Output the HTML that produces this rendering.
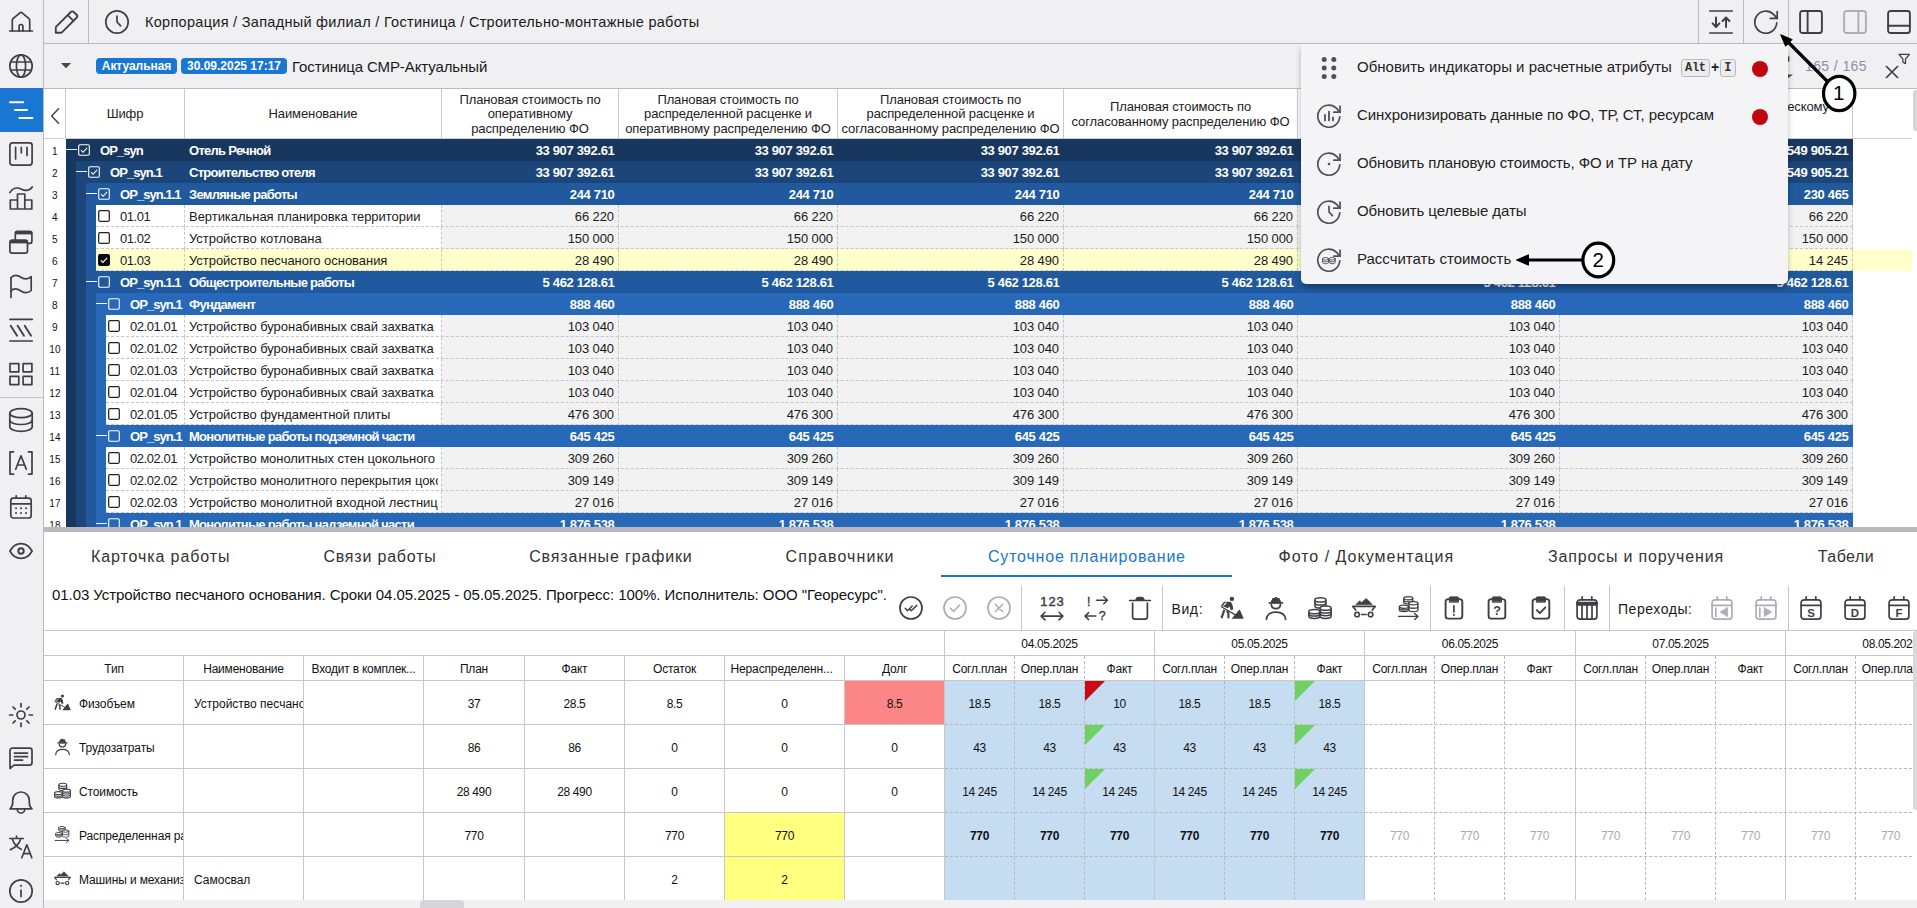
<!DOCTYPE html><html lang="ru"><head><meta charset="utf-8"><title>Суточное планирование</title><style>
*{box-sizing:border-box}
html,body{margin:0;padding:0}
body{width:1917px;height:908px;overflow:hidden;position:relative;background:#f0f0f3;font-family:"Liberation Sans",sans-serif;color:#1a1a1a;font-size:13px}
.a{position:absolute}
.t{position:absolute;white-space:pre;line-height:1}
svg{position:absolute;overflow:visible}
.ic{fill:none;stroke:#3a3a3f;stroke-width:1.6;stroke-linecap:round;stroke-linejoin:round}
.row{position:absolute;left:66px;height:22px;width:1787px}
.num{position:absolute;left:44px;width:22px;text-align:center;letter-spacing:.3px;font-size:10px;line-height:25px;height:22px;color:#111}
.c{position:absolute;top:0;height:22px;line-height:23.5px;white-space:pre;overflow:hidden;font-size:13px}
.r{text-align:right}
.b{font-weight:700;color:#fff;letter-spacing:-0.72px}
.bn{letter-spacing:-0.33px}
.bc{letter-spacing:-0.95px}
.hd{position:absolute;top:90px;height:49px;text-align:center;font-size:13px;line-height:14.5px;display:flex;align-items:center;justify-content:center;white-space:pre;color:#222;letter-spacing:-0.1px}
.tab{position:absolute;top:548px;font-size:16px;letter-spacing:.8px;color:#333;white-space:pre;line-height:18px}
.g{position:absolute;white-space:pre;font-size:12px;line-height:14px;text-align:center;color:#111}
</style></head><body>
<div class="a" style="left:0px;top:0px;width:1917px;height:44px;background:#f0f0f3;border-bottom:1px solid #bbbbc3"></div>
<div class="a" style="left:0px;top:44px;width:1917px;height:45px;background:#f0f0f3;border-bottom:1px solid #bbbbc3"></div>
<div class="a" style="left:0px;top:0px;width:44px;height:908px;background:#f0f0f3;border-right:1px solid #bbbbc3"></div>
<div class="a" style="left:0px;top:88px;width:43px;height:44px;background:#1976d2"></div>
<div class="a" style="left:0px;top:397px;width:43px;height:1px;background:#c0c0c8"></div>
<div class="a" style="left:88px;top:0px;width:1px;height:43px;background:#bbbbc3"></div>
<div class="a" style="left:1698px;top:0px;width:1px;height:43px;background:#bbbbc3"></div>
<div class="a" style="left:1743px;top:0px;width:1px;height:43px;background:#bbbbc3"></div>
<div class="a" style="left:1788px;top:0px;width:1px;height:43px;background:#bbbbc3"></div>
<div class="t" style="left:145px;top:15px;font-size:14.5px;color:#1a1a1a;letter-spacing:0.29px">Корпорация / Западный филиал / Гостиница / Строительно-монтажные работы</div>
<svg style="left:60px;top:62px" width="12" height="7" viewBox="0 0 12 7"><path d="M0.9 1h10.2l-5.100 5.200z" fill="#47474d"/></svg>
<div class="a" style="left:96px;top:58px;width:81px;height:16px;background:#1976d2;border-radius:4px;color:#fff;font-size:12px;font-weight:700;line-height:16px;text-align:center;letter-spacing:-0.05px">Актуальная</div>
<div class="a" style="left:181px;top:58px;width:106px;height:16px;background:#1976d2;border-radius:4px;color:#fff;font-size:12px;font-weight:700;line-height:16px;text-align:center;letter-spacing:0px">30.09.2025 17:17</div>
<div class="t" style="left:292px;top:59px;font-size:15px;letter-spacing:-0.1px">Гостиница СМР-Актуальный</div>
<div class="t" style="left:1805px;top:58.5px;font-size:14px;color:#8b90a7;letter-spacing:0.4px">165 / 165</div>
<div class="a" style="left:44px;top:89px;width:1873px;height:438px;background:#fff"></div>
<div class="a" style="left:44px;top:138px;width:1868px;height:1px;background:#d0d0d4"></div>
<div class="a" style="left:65px;top:89px;width:1px;height:49px;background:#c9c9cd"></div>
<div class="a" style="left:184px;top:89px;width:1px;height:49px;background:#c9c9cd"></div>
<div class="a" style="left:441px;top:89px;width:1px;height:49px;background:#c9c9cd"></div>
<div class="a" style="left:618px;top:89px;width:1px;height:49px;background:#c9c9cd"></div>
<div class="a" style="left:837px;top:89px;width:1px;height:49px;background:#c9c9cd"></div>
<div class="a" style="left:1063px;top:89px;width:1px;height:49px;background:#c9c9cd"></div>
<div class="a" style="left:1297px;top:89px;width:1px;height:49px;background:#c9c9cd"></div>
<div class="a" style="left:1559px;top:89px;width:1px;height:49px;background:#c9c9cd"></div>
<div class="a" style="left:1852px;top:89px;width:1px;height:49px;background:#c9c9cd"></div>
<div class="hd" style="left:66px;width:118px;">Шифр</div>
<div class="hd" style="left:185px;width:256px;">Наименование</div>
<div class="hd" style="left:442px;width:176px;">Плановая стоимость по
оперативному
распределению ФО</div>
<div class="hd" style="left:619px;width:218px;">Плановая стоимость по
распределенной расценке и
оперативному распределению ФО</div>
<div class="hd" style="left:838px;width:225px;">Плановая стоимость по
распределенной расценке и
согласованному распределению ФО</div>
<div class="hd" style="left:1064px;width:233px;">Плановая стоимость по
согласованному распределению ФО</div>
<div class="hd" style="left:1298px;width:261px;">Плановая стоимость по
оперативному распределению СТ</div>
<div class="hd" style="left:1560px;width:292px;padding-left:5px;">Фактическая стоимость по физическому
объему работ</div>
<svg style="left:50px;top:108px" width="10" height="16" viewBox="0 0 10 16"><path d="M8.6 0.8L1.6 8L8.6 15.2" fill="none" stroke="#444" stroke-width="1.5" stroke-linecap="round" stroke-linejoin="round"/></svg>
<div class="a" style="left:0;top:139px;width:1917px;height:388px;overflow:hidden">
<div class="num" style="top:0px">1</div>
<div class="row" style="top:0px">
<div class="a" style="left:0px;top:0;width:1787px;height:22px;background:#17375e"></div>
<div class="a" style="left:0px;top:10px;width:10.5px;height:1.3px;background:#fff;opacity:.95"></div>
<svg style="left:12px;top:5px" width="12" height="12" viewBox="0 0 12 12"><rect x="0.7" y="0.7" width="10.6" height="10.6" rx="1.2" fill="none" stroke="#fff" stroke-width="1.1"/><path d="M3 6.2l2.1 2.1l4-4.4" fill="none" stroke="#fff" stroke-width="1.1"/></svg>
<div class="c b bc" style="left:34px;width:85px">OP_syn</div>
<div class="c b" style="left:123px;width:250px">Отель Речной</div>
<div class="c r b bn" style="left:376px;width:172.5px">33 907 392.61</div>
<div class="c r b bn" style="left:553px;width:214.5px">33 907 392.61</div>
<div class="c r b bn" style="left:772px;width:221.5px">33 907 392.61</div>
<div class="c r b bn" style="left:998px;width:229.5px">33 907 392.61</div>
<div class="c r b bn" style="left:1232px;width:257.5px">33 907 392.61</div>
<div class="c r b bn" style="left:1494px;width:288.5px">28 549 905.21</div>
</div>
<div class="num" style="top:22px">2</div>
<div class="row" style="top:22px">
<div class="a" style="left:0px;top:0;width:10px;height:22px;background:#17375e"></div>
<div class="a" style="left:10px;top:0;width:1777px;height:22px;background:#1c467a"></div>
<div class="a" style="left:10px;top:10px;width:10.5px;height:1.3px;background:#fff;opacity:.95"></div>
<svg style="left:22px;top:5px" width="12" height="12" viewBox="0 0 12 12"><rect x="0.7" y="0.7" width="10.6" height="10.6" rx="1.2" fill="none" stroke="#fff" stroke-width="1.1"/><path d="M3 6.2l2.1 2.1l4-4.4" fill="none" stroke="#fff" stroke-width="1.1"/></svg>
<div class="c b bc" style="left:44px;width:75px">OP_syn.1</div>
<div class="c b" style="left:123px;width:250px">Строительство отеля</div>
<div class="c r b bn" style="left:376px;width:172.5px">33 907 392.61</div>
<div class="c r b bn" style="left:553px;width:214.5px">33 907 392.61</div>
<div class="c r b bn" style="left:772px;width:221.5px">33 907 392.61</div>
<div class="c r b bn" style="left:998px;width:229.5px">33 907 392.61</div>
<div class="c r b bn" style="left:1232px;width:257.5px">33 907 392.61</div>
<div class="c r b bn" style="left:1494px;width:288.5px">28 549 905.21</div>
</div>
<div class="num" style="top:44px">3</div>
<div class="row" style="top:44px">
<div class="a" style="left:0px;top:0;width:10px;height:22px;background:#17375e"></div>
<div class="a" style="left:10px;top:0;width:10px;height:22px;background:#1c467a"></div>
<div class="a" style="left:20px;top:0;width:1767px;height:22px;background:#20599d"></div>
<div class="a" style="left:20px;top:10px;width:10.5px;height:1.3px;background:#fff;opacity:.95"></div>
<svg style="left:32px;top:5px" width="12" height="12" viewBox="0 0 12 12"><rect x="0.7" y="0.7" width="10.6" height="10.6" rx="1.2" fill="none" stroke="#fff" stroke-width="1.1"/><path d="M3 6.2l2.1 2.1l4-4.4" fill="none" stroke="#fff" stroke-width="1.1"/></svg>
<div class="c b bc" style="left:54px;width:65px">OP_syn.1.1</div>
<div class="c b" style="left:123px;width:250px">Земляные работы</div>
<div class="c r b bn" style="left:376px;width:172.5px">244 710</div>
<div class="c r b bn" style="left:553px;width:214.5px">244 710</div>
<div class="c r b bn" style="left:772px;width:221.5px">244 710</div>
<div class="c r b bn" style="left:998px;width:229.5px">244 710</div>
<div class="c r b bn" style="left:1232px;width:257.5px">244 710</div>
<div class="c r b bn" style="left:1494px;width:288.5px">230 465</div>
</div>
<div class="num" style="top:66px">4</div>
<div class="row" style="top:66px">
<div class="a" style="left:0px;top:0;width:10px;height:22px;background:#17375e"></div>
<div class="a" style="left:10px;top:0;width:10px;height:22px;background:#1c467a"></div>
<div class="a" style="left:20px;top:0;width:10px;height:22px;background:#20599d"></div>
<div class="a" style="left:30px;top:0;width:346px;height:22px;background:#fff"></div>
<div class="a" style="left:376px;top:0;width:1411px;height:22px;background:#f2f2f2"></div>
<svg style="left:32px;top:5px" width="12" height="12" viewBox="0 0 12 12"><rect x="0.7" y="0.7" width="10.6" height="10.6" rx="1.2" fill="#fff" stroke="#222" stroke-width="1.25"/></svg>
<div class="c" style="left:54px;width:65px;letter-spacing:-0.45px">01.01</div>
<div class="c" style="left:123px;width:249px;letter-spacing:-0.04px">Вертикальная планировка территории</div>
<div class="c r" style="left:376px;width:172px;letter-spacing:-0.1px">66 220</div>
<div class="c r" style="left:553px;width:214px;letter-spacing:-0.1px">66 220</div>
<div class="c r" style="left:772px;width:221px;letter-spacing:-0.1px">66 220</div>
<div class="c r" style="left:998px;width:229px;letter-spacing:-0.1px">66 220</div>
<div class="c r" style="left:1232px;width:257px;letter-spacing:-0.1px">66 220</div>
<div class="c r" style="left:1494px;width:288px;letter-spacing:-0.1px">66 220</div>
<div class="a" style="left:30px;top:21px;width:1757px;height:0;border-top:1px dashed #c6c6c6"></div>
<div class="a" style="left:118px;top:0;width:0;height:22px;border-left:1px dashed #c6c6c6"></div>
<div class="a" style="left:375px;top:0;width:0;height:22px;border-left:1px dashed #c6c6c6"></div>
<div class="a" style="left:552px;top:0;width:0;height:22px;border-left:1px dashed #c6c6c6"></div>
<div class="a" style="left:771px;top:0;width:0;height:22px;border-left:1px dashed #c6c6c6"></div>
<div class="a" style="left:997px;top:0;width:0;height:22px;border-left:1px dashed #c6c6c6"></div>
<div class="a" style="left:1231px;top:0;width:0;height:22px;border-left:1px dashed #c6c6c6"></div>
<div class="a" style="left:1493px;top:0;width:0;height:22px;border-left:1px dashed #c6c6c6"></div>
<div class="a" style="left:1786px;top:0;width:0;height:22px;border-left:1px dashed #c6c6c6"></div>
</div>
<div class="num" style="top:88px">5</div>
<div class="row" style="top:88px">
<div class="a" style="left:0px;top:0;width:10px;height:22px;background:#17375e"></div>
<div class="a" style="left:10px;top:0;width:10px;height:22px;background:#1c467a"></div>
<div class="a" style="left:20px;top:0;width:10px;height:22px;background:#20599d"></div>
<div class="a" style="left:30px;top:0;width:346px;height:22px;background:#fff"></div>
<div class="a" style="left:376px;top:0;width:1411px;height:22px;background:#f2f2f2"></div>
<svg style="left:32px;top:5px" width="12" height="12" viewBox="0 0 12 12"><rect x="0.7" y="0.7" width="10.6" height="10.6" rx="1.2" fill="#fff" stroke="#222" stroke-width="1.25"/></svg>
<div class="c" style="left:54px;width:65px;letter-spacing:-0.45px">01.02</div>
<div class="c" style="left:123px;width:249px;letter-spacing:-0.04px">Устройство котлована</div>
<div class="c r" style="left:376px;width:172px;letter-spacing:-0.1px">150 000</div>
<div class="c r" style="left:553px;width:214px;letter-spacing:-0.1px">150 000</div>
<div class="c r" style="left:772px;width:221px;letter-spacing:-0.1px">150 000</div>
<div class="c r" style="left:998px;width:229px;letter-spacing:-0.1px">150 000</div>
<div class="c r" style="left:1232px;width:257px;letter-spacing:-0.1px">150 000</div>
<div class="c r" style="left:1494px;width:288px;letter-spacing:-0.1px">150 000</div>
<div class="a" style="left:30px;top:21px;width:1757px;height:0;border-top:1px dashed #c6c6c6"></div>
<div class="a" style="left:118px;top:0;width:0;height:22px;border-left:1px dashed #c6c6c6"></div>
<div class="a" style="left:375px;top:0;width:0;height:22px;border-left:1px dashed #c6c6c6"></div>
<div class="a" style="left:552px;top:0;width:0;height:22px;border-left:1px dashed #c6c6c6"></div>
<div class="a" style="left:771px;top:0;width:0;height:22px;border-left:1px dashed #c6c6c6"></div>
<div class="a" style="left:997px;top:0;width:0;height:22px;border-left:1px dashed #c6c6c6"></div>
<div class="a" style="left:1231px;top:0;width:0;height:22px;border-left:1px dashed #c6c6c6"></div>
<div class="a" style="left:1493px;top:0;width:0;height:22px;border-left:1px dashed #c6c6c6"></div>
<div class="a" style="left:1786px;top:0;width:0;height:22px;border-left:1px dashed #c6c6c6"></div>
</div>
<div class="num" style="top:110px">6</div>
<div class="row" style="top:110px">
<div class="a" style="left:0px;top:0;width:10px;height:22px;background:#17375e"></div>
<div class="a" style="left:10px;top:0;width:10px;height:22px;background:#1c467a"></div>
<div class="a" style="left:20px;top:0;width:10px;height:22px;background:#20599d"></div>
<div class="a" style="left:30px;top:0;width:346px;height:22px;background:#ffffcc"></div>
<div class="a" style="left:376px;top:0;width:1411px;height:22px;background:#ffffcc"></div>
<div class="a" style="left:1787px;top:0;width:59px;height:22px;background:#ffffcc"></div>
<svg style="left:32px;top:5px" width="12" height="12" viewBox="0 0 12 12"><rect x="0.5" y="0.5" width="11" height="11" rx="1.2" fill="#0a0a0a" stroke="#0a0a0a"/><path d="M2.8 6.3l2.100 2.100l4.200-4.500" fill="none" stroke="#fff" stroke-width="1.150"/></svg>
<div class="c" style="left:54px;width:65px;letter-spacing:-0.45px">01.03</div>
<div class="c" style="left:123px;width:249px;letter-spacing:-0.04px">Устройство песчаного основания</div>
<div class="c r" style="left:376px;width:172px;letter-spacing:-0.1px">28 490</div>
<div class="c r" style="left:553px;width:214px;letter-spacing:-0.1px">28 490</div>
<div class="c r" style="left:772px;width:221px;letter-spacing:-0.1px">28 490</div>
<div class="c r" style="left:998px;width:229px;letter-spacing:-0.1px">28 490</div>
<div class="c r" style="left:1232px;width:257px;letter-spacing:-0.1px">28 490</div>
<div class="c r" style="left:1494px;width:288px;letter-spacing:-0.1px">14 245</div>
<div class="a" style="left:30px;top:21px;width:1757px;height:0;border-top:1px dashed #c6c6c6"></div>
<div class="a" style="left:118px;top:0;width:0;height:22px;border-left:1px dashed #c6c6c6"></div>
<div class="a" style="left:375px;top:0;width:0;height:22px;border-left:1px dashed #c6c6c6"></div>
<div class="a" style="left:552px;top:0;width:0;height:22px;border-left:1px dashed #c6c6c6"></div>
<div class="a" style="left:771px;top:0;width:0;height:22px;border-left:1px dashed #c6c6c6"></div>
<div class="a" style="left:997px;top:0;width:0;height:22px;border-left:1px dashed #c6c6c6"></div>
<div class="a" style="left:1231px;top:0;width:0;height:22px;border-left:1px dashed #c6c6c6"></div>
<div class="a" style="left:1493px;top:0;width:0;height:22px;border-left:1px dashed #c6c6c6"></div>
<div class="a" style="left:1786px;top:0;width:0;height:22px;border-left:1px dashed #c6c6c6"></div>
</div>
<div class="num" style="top:132px">7</div>
<div class="row" style="top:132px">
<div class="a" style="left:0px;top:0;width:10px;height:22px;background:#17375e"></div>
<div class="a" style="left:10px;top:0;width:10px;height:22px;background:#1c467a"></div>
<div class="a" style="left:20px;top:0;width:1767px;height:22px;background:#20599d"></div>
<div class="a" style="left:20px;top:10px;width:10.5px;height:1.3px;background:#fff;opacity:.95"></div>
<svg style="left:32px;top:5px" width="12" height="12" viewBox="0 0 12 12"><rect x="0.7" y="0.7" width="10.6" height="10.6" rx="1.2" fill="none" stroke="#fff" stroke-width="1.1"/></svg>
<div class="c b bc" style="left:54px;width:65px">OP_syn.1.1</div>
<div class="c b" style="left:123px;width:250px">Общестроительные работы</div>
<div class="c r b bn" style="left:376px;width:172.5px">5 462 128.61</div>
<div class="c r b bn" style="left:553px;width:214.5px">5 462 128.61</div>
<div class="c r b bn" style="left:772px;width:221.5px">5 462 128.61</div>
<div class="c r b bn" style="left:998px;width:229.5px">5 462 128.61</div>
<div class="c r b bn" style="left:1232px;width:257.5px">5 462 128.61</div>
<div class="c r b bn" style="left:1494px;width:288.5px">5 462 128.61</div>
</div>
<div class="num" style="top:154px">8</div>
<div class="row" style="top:154px">
<div class="a" style="left:0px;top:0;width:10px;height:22px;background:#17375e"></div>
<div class="a" style="left:10px;top:0;width:10px;height:22px;background:#1c467a"></div>
<div class="a" style="left:20px;top:0;width:10px;height:22px;background:#20599d"></div>
<div class="a" style="left:30px;top:0;width:1757px;height:22px;background:#2768b8"></div>
<div class="a" style="left:30px;top:10px;width:10.5px;height:1.3px;background:#fff;opacity:.95"></div>
<svg style="left:42px;top:5px" width="12" height="12" viewBox="0 0 12 12"><rect x="0.7" y="0.7" width="10.6" height="10.6" rx="1.2" fill="none" stroke="#fff" stroke-width="1.1"/></svg>
<div class="c b bc" style="left:64px;width:55px">OP_syn.1</div>
<div class="c b" style="left:123px;width:250px">Фундамент</div>
<div class="c r b bn" style="left:376px;width:172.5px">888 460</div>
<div class="c r b bn" style="left:553px;width:214.5px">888 460</div>
<div class="c r b bn" style="left:772px;width:221.5px">888 460</div>
<div class="c r b bn" style="left:998px;width:229.5px">888 460</div>
<div class="c r b bn" style="left:1232px;width:257.5px">888 460</div>
<div class="c r b bn" style="left:1494px;width:288.5px">888 460</div>
</div>
<div class="num" style="top:176px">9</div>
<div class="row" style="top:176px">
<div class="a" style="left:0px;top:0;width:10px;height:22px;background:#17375e"></div>
<div class="a" style="left:10px;top:0;width:10px;height:22px;background:#1c467a"></div>
<div class="a" style="left:20px;top:0;width:10px;height:22px;background:#20599d"></div>
<div class="a" style="left:30px;top:0;width:10px;height:22px;background:#2768b8"></div>
<div class="a" style="left:40px;top:0;width:336px;height:22px;background:#fff"></div>
<div class="a" style="left:376px;top:0;width:1411px;height:22px;background:#f2f2f2"></div>
<svg style="left:42px;top:5px" width="12" height="12" viewBox="0 0 12 12"><rect x="0.7" y="0.7" width="10.6" height="10.6" rx="1.2" fill="#fff" stroke="#222" stroke-width="1.25"/></svg>
<div class="c" style="left:64px;width:55px;letter-spacing:-0.45px">02.01.01</div>
<div class="c" style="left:123px;width:249px;letter-spacing:-0.04px">Устройство буронабивных свай захватка</div>
<div class="c r" style="left:376px;width:172px;letter-spacing:-0.1px">103 040</div>
<div class="c r" style="left:553px;width:214px;letter-spacing:-0.1px">103 040</div>
<div class="c r" style="left:772px;width:221px;letter-spacing:-0.1px">103 040</div>
<div class="c r" style="left:998px;width:229px;letter-spacing:-0.1px">103 040</div>
<div class="c r" style="left:1232px;width:257px;letter-spacing:-0.1px">103 040</div>
<div class="c r" style="left:1494px;width:288px;letter-spacing:-0.1px">103 040</div>
<div class="a" style="left:40px;top:21px;width:1747px;height:0;border-top:1px dashed #c6c6c6"></div>
<div class="a" style="left:118px;top:0;width:0;height:22px;border-left:1px dashed #c6c6c6"></div>
<div class="a" style="left:375px;top:0;width:0;height:22px;border-left:1px dashed #c6c6c6"></div>
<div class="a" style="left:552px;top:0;width:0;height:22px;border-left:1px dashed #c6c6c6"></div>
<div class="a" style="left:771px;top:0;width:0;height:22px;border-left:1px dashed #c6c6c6"></div>
<div class="a" style="left:997px;top:0;width:0;height:22px;border-left:1px dashed #c6c6c6"></div>
<div class="a" style="left:1231px;top:0;width:0;height:22px;border-left:1px dashed #c6c6c6"></div>
<div class="a" style="left:1493px;top:0;width:0;height:22px;border-left:1px dashed #c6c6c6"></div>
<div class="a" style="left:1786px;top:0;width:0;height:22px;border-left:1px dashed #c6c6c6"></div>
</div>
<div class="num" style="top:198px">10</div>
<div class="row" style="top:198px">
<div class="a" style="left:0px;top:0;width:10px;height:22px;background:#17375e"></div>
<div class="a" style="left:10px;top:0;width:10px;height:22px;background:#1c467a"></div>
<div class="a" style="left:20px;top:0;width:10px;height:22px;background:#20599d"></div>
<div class="a" style="left:30px;top:0;width:10px;height:22px;background:#2768b8"></div>
<div class="a" style="left:40px;top:0;width:336px;height:22px;background:#fff"></div>
<div class="a" style="left:376px;top:0;width:1411px;height:22px;background:#f2f2f2"></div>
<svg style="left:42px;top:5px" width="12" height="12" viewBox="0 0 12 12"><rect x="0.7" y="0.7" width="10.6" height="10.6" rx="1.2" fill="#fff" stroke="#222" stroke-width="1.25"/></svg>
<div class="c" style="left:64px;width:55px;letter-spacing:-0.45px">02.01.02</div>
<div class="c" style="left:123px;width:249px;letter-spacing:-0.04px">Устройство буронабивных свай захватка</div>
<div class="c r" style="left:376px;width:172px;letter-spacing:-0.1px">103 040</div>
<div class="c r" style="left:553px;width:214px;letter-spacing:-0.1px">103 040</div>
<div class="c r" style="left:772px;width:221px;letter-spacing:-0.1px">103 040</div>
<div class="c r" style="left:998px;width:229px;letter-spacing:-0.1px">103 040</div>
<div class="c r" style="left:1232px;width:257px;letter-spacing:-0.1px">103 040</div>
<div class="c r" style="left:1494px;width:288px;letter-spacing:-0.1px">103 040</div>
<div class="a" style="left:40px;top:21px;width:1747px;height:0;border-top:1px dashed #c6c6c6"></div>
<div class="a" style="left:118px;top:0;width:0;height:22px;border-left:1px dashed #c6c6c6"></div>
<div class="a" style="left:375px;top:0;width:0;height:22px;border-left:1px dashed #c6c6c6"></div>
<div class="a" style="left:552px;top:0;width:0;height:22px;border-left:1px dashed #c6c6c6"></div>
<div class="a" style="left:771px;top:0;width:0;height:22px;border-left:1px dashed #c6c6c6"></div>
<div class="a" style="left:997px;top:0;width:0;height:22px;border-left:1px dashed #c6c6c6"></div>
<div class="a" style="left:1231px;top:0;width:0;height:22px;border-left:1px dashed #c6c6c6"></div>
<div class="a" style="left:1493px;top:0;width:0;height:22px;border-left:1px dashed #c6c6c6"></div>
<div class="a" style="left:1786px;top:0;width:0;height:22px;border-left:1px dashed #c6c6c6"></div>
</div>
<div class="num" style="top:220px">11</div>
<div class="row" style="top:220px">
<div class="a" style="left:0px;top:0;width:10px;height:22px;background:#17375e"></div>
<div class="a" style="left:10px;top:0;width:10px;height:22px;background:#1c467a"></div>
<div class="a" style="left:20px;top:0;width:10px;height:22px;background:#20599d"></div>
<div class="a" style="left:30px;top:0;width:10px;height:22px;background:#2768b8"></div>
<div class="a" style="left:40px;top:0;width:336px;height:22px;background:#fff"></div>
<div class="a" style="left:376px;top:0;width:1411px;height:22px;background:#f2f2f2"></div>
<svg style="left:42px;top:5px" width="12" height="12" viewBox="0 0 12 12"><rect x="0.7" y="0.7" width="10.6" height="10.6" rx="1.2" fill="#fff" stroke="#222" stroke-width="1.25"/></svg>
<div class="c" style="left:64px;width:55px;letter-spacing:-0.45px">02.01.03</div>
<div class="c" style="left:123px;width:249px;letter-spacing:-0.04px">Устройство буронабивных свай захватка</div>
<div class="c r" style="left:376px;width:172px;letter-spacing:-0.1px">103 040</div>
<div class="c r" style="left:553px;width:214px;letter-spacing:-0.1px">103 040</div>
<div class="c r" style="left:772px;width:221px;letter-spacing:-0.1px">103 040</div>
<div class="c r" style="left:998px;width:229px;letter-spacing:-0.1px">103 040</div>
<div class="c r" style="left:1232px;width:257px;letter-spacing:-0.1px">103 040</div>
<div class="c r" style="left:1494px;width:288px;letter-spacing:-0.1px">103 040</div>
<div class="a" style="left:40px;top:21px;width:1747px;height:0;border-top:1px dashed #c6c6c6"></div>
<div class="a" style="left:118px;top:0;width:0;height:22px;border-left:1px dashed #c6c6c6"></div>
<div class="a" style="left:375px;top:0;width:0;height:22px;border-left:1px dashed #c6c6c6"></div>
<div class="a" style="left:552px;top:0;width:0;height:22px;border-left:1px dashed #c6c6c6"></div>
<div class="a" style="left:771px;top:0;width:0;height:22px;border-left:1px dashed #c6c6c6"></div>
<div class="a" style="left:997px;top:0;width:0;height:22px;border-left:1px dashed #c6c6c6"></div>
<div class="a" style="left:1231px;top:0;width:0;height:22px;border-left:1px dashed #c6c6c6"></div>
<div class="a" style="left:1493px;top:0;width:0;height:22px;border-left:1px dashed #c6c6c6"></div>
<div class="a" style="left:1786px;top:0;width:0;height:22px;border-left:1px dashed #c6c6c6"></div>
</div>
<div class="num" style="top:242px">12</div>
<div class="row" style="top:242px">
<div class="a" style="left:0px;top:0;width:10px;height:22px;background:#17375e"></div>
<div class="a" style="left:10px;top:0;width:10px;height:22px;background:#1c467a"></div>
<div class="a" style="left:20px;top:0;width:10px;height:22px;background:#20599d"></div>
<div class="a" style="left:30px;top:0;width:10px;height:22px;background:#2768b8"></div>
<div class="a" style="left:40px;top:0;width:336px;height:22px;background:#fff"></div>
<div class="a" style="left:376px;top:0;width:1411px;height:22px;background:#f2f2f2"></div>
<svg style="left:42px;top:5px" width="12" height="12" viewBox="0 0 12 12"><rect x="0.7" y="0.7" width="10.6" height="10.6" rx="1.2" fill="#fff" stroke="#222" stroke-width="1.25"/></svg>
<div class="c" style="left:64px;width:55px;letter-spacing:-0.45px">02.01.04</div>
<div class="c" style="left:123px;width:249px;letter-spacing:-0.04px">Устройство буронабивных свай захватка</div>
<div class="c r" style="left:376px;width:172px;letter-spacing:-0.1px">103 040</div>
<div class="c r" style="left:553px;width:214px;letter-spacing:-0.1px">103 040</div>
<div class="c r" style="left:772px;width:221px;letter-spacing:-0.1px">103 040</div>
<div class="c r" style="left:998px;width:229px;letter-spacing:-0.1px">103 040</div>
<div class="c r" style="left:1232px;width:257px;letter-spacing:-0.1px">103 040</div>
<div class="c r" style="left:1494px;width:288px;letter-spacing:-0.1px">103 040</div>
<div class="a" style="left:40px;top:21px;width:1747px;height:0;border-top:1px dashed #c6c6c6"></div>
<div class="a" style="left:118px;top:0;width:0;height:22px;border-left:1px dashed #c6c6c6"></div>
<div class="a" style="left:375px;top:0;width:0;height:22px;border-left:1px dashed #c6c6c6"></div>
<div class="a" style="left:552px;top:0;width:0;height:22px;border-left:1px dashed #c6c6c6"></div>
<div class="a" style="left:771px;top:0;width:0;height:22px;border-left:1px dashed #c6c6c6"></div>
<div class="a" style="left:997px;top:0;width:0;height:22px;border-left:1px dashed #c6c6c6"></div>
<div class="a" style="left:1231px;top:0;width:0;height:22px;border-left:1px dashed #c6c6c6"></div>
<div class="a" style="left:1493px;top:0;width:0;height:22px;border-left:1px dashed #c6c6c6"></div>
<div class="a" style="left:1786px;top:0;width:0;height:22px;border-left:1px dashed #c6c6c6"></div>
</div>
<div class="num" style="top:264px">13</div>
<div class="row" style="top:264px">
<div class="a" style="left:0px;top:0;width:10px;height:22px;background:#17375e"></div>
<div class="a" style="left:10px;top:0;width:10px;height:22px;background:#1c467a"></div>
<div class="a" style="left:20px;top:0;width:10px;height:22px;background:#20599d"></div>
<div class="a" style="left:30px;top:0;width:10px;height:22px;background:#2768b8"></div>
<div class="a" style="left:40px;top:0;width:336px;height:22px;background:#fff"></div>
<div class="a" style="left:376px;top:0;width:1411px;height:22px;background:#f2f2f2"></div>
<svg style="left:42px;top:5px" width="12" height="12" viewBox="0 0 12 12"><rect x="0.7" y="0.7" width="10.6" height="10.6" rx="1.2" fill="#fff" stroke="#222" stroke-width="1.25"/></svg>
<div class="c" style="left:64px;width:55px;letter-spacing:-0.45px">02.01.05</div>
<div class="c" style="left:123px;width:249px;letter-spacing:-0.04px">Устройство фундаментной плиты</div>
<div class="c r" style="left:376px;width:172px;letter-spacing:-0.1px">476 300</div>
<div class="c r" style="left:553px;width:214px;letter-spacing:-0.1px">476 300</div>
<div class="c r" style="left:772px;width:221px;letter-spacing:-0.1px">476 300</div>
<div class="c r" style="left:998px;width:229px;letter-spacing:-0.1px">476 300</div>
<div class="c r" style="left:1232px;width:257px;letter-spacing:-0.1px">476 300</div>
<div class="c r" style="left:1494px;width:288px;letter-spacing:-0.1px">476 300</div>
<div class="a" style="left:40px;top:21px;width:1747px;height:0;border-top:1px dashed #c6c6c6"></div>
<div class="a" style="left:118px;top:0;width:0;height:22px;border-left:1px dashed #c6c6c6"></div>
<div class="a" style="left:375px;top:0;width:0;height:22px;border-left:1px dashed #c6c6c6"></div>
<div class="a" style="left:552px;top:0;width:0;height:22px;border-left:1px dashed #c6c6c6"></div>
<div class="a" style="left:771px;top:0;width:0;height:22px;border-left:1px dashed #c6c6c6"></div>
<div class="a" style="left:997px;top:0;width:0;height:22px;border-left:1px dashed #c6c6c6"></div>
<div class="a" style="left:1231px;top:0;width:0;height:22px;border-left:1px dashed #c6c6c6"></div>
<div class="a" style="left:1493px;top:0;width:0;height:22px;border-left:1px dashed #c6c6c6"></div>
<div class="a" style="left:1786px;top:0;width:0;height:22px;border-left:1px dashed #c6c6c6"></div>
</div>
<div class="num" style="top:286px">14</div>
<div class="row" style="top:286px">
<div class="a" style="left:0px;top:0;width:10px;height:22px;background:#17375e"></div>
<div class="a" style="left:10px;top:0;width:10px;height:22px;background:#1c467a"></div>
<div class="a" style="left:20px;top:0;width:10px;height:22px;background:#20599d"></div>
<div class="a" style="left:30px;top:0;width:1757px;height:22px;background:#2768b8"></div>
<div class="a" style="left:30px;top:10px;width:10.5px;height:1.3px;background:#fff;opacity:.95"></div>
<svg style="left:42px;top:5px" width="12" height="12" viewBox="0 0 12 12"><rect x="0.7" y="0.7" width="10.6" height="10.6" rx="1.2" fill="none" stroke="#fff" stroke-width="1.1"/></svg>
<div class="c b bc" style="left:64px;width:55px">OP_syn.1</div>
<div class="c b" style="left:123px;width:250px">Монолитные работы подземной части</div>
<div class="c r b bn" style="left:376px;width:172.5px">645 425</div>
<div class="c r b bn" style="left:553px;width:214.5px">645 425</div>
<div class="c r b bn" style="left:772px;width:221.5px">645 425</div>
<div class="c r b bn" style="left:998px;width:229.5px">645 425</div>
<div class="c r b bn" style="left:1232px;width:257.5px">645 425</div>
<div class="c r b bn" style="left:1494px;width:288.5px">645 425</div>
</div>
<div class="num" style="top:308px">15</div>
<div class="row" style="top:308px">
<div class="a" style="left:0px;top:0;width:10px;height:22px;background:#17375e"></div>
<div class="a" style="left:10px;top:0;width:10px;height:22px;background:#1c467a"></div>
<div class="a" style="left:20px;top:0;width:10px;height:22px;background:#20599d"></div>
<div class="a" style="left:30px;top:0;width:10px;height:22px;background:#2768b8"></div>
<div class="a" style="left:40px;top:0;width:336px;height:22px;background:#fff"></div>
<div class="a" style="left:376px;top:0;width:1411px;height:22px;background:#f2f2f2"></div>
<svg style="left:42px;top:5px" width="12" height="12" viewBox="0 0 12 12"><rect x="0.7" y="0.7" width="10.6" height="10.6" rx="1.2" fill="#fff" stroke="#222" stroke-width="1.25"/></svg>
<div class="c" style="left:64px;width:55px;letter-spacing:-0.45px">02.02.01</div>
<div class="c" style="left:123px;width:249px;letter-spacing:-0.04px">Устройство монолитных стен цокольного этажа</div>
<div class="c r" style="left:376px;width:172px;letter-spacing:-0.1px">309 260</div>
<div class="c r" style="left:553px;width:214px;letter-spacing:-0.1px">309 260</div>
<div class="c r" style="left:772px;width:221px;letter-spacing:-0.1px">309 260</div>
<div class="c r" style="left:998px;width:229px;letter-spacing:-0.1px">309 260</div>
<div class="c r" style="left:1232px;width:257px;letter-spacing:-0.1px">309 260</div>
<div class="c r" style="left:1494px;width:288px;letter-spacing:-0.1px">309 260</div>
<div class="a" style="left:40px;top:21px;width:1747px;height:0;border-top:1px dashed #c6c6c6"></div>
<div class="a" style="left:118px;top:0;width:0;height:22px;border-left:1px dashed #c6c6c6"></div>
<div class="a" style="left:375px;top:0;width:0;height:22px;border-left:1px dashed #c6c6c6"></div>
<div class="a" style="left:552px;top:0;width:0;height:22px;border-left:1px dashed #c6c6c6"></div>
<div class="a" style="left:771px;top:0;width:0;height:22px;border-left:1px dashed #c6c6c6"></div>
<div class="a" style="left:997px;top:0;width:0;height:22px;border-left:1px dashed #c6c6c6"></div>
<div class="a" style="left:1231px;top:0;width:0;height:22px;border-left:1px dashed #c6c6c6"></div>
<div class="a" style="left:1493px;top:0;width:0;height:22px;border-left:1px dashed #c6c6c6"></div>
<div class="a" style="left:1786px;top:0;width:0;height:22px;border-left:1px dashed #c6c6c6"></div>
</div>
<div class="num" style="top:330px">16</div>
<div class="row" style="top:330px">
<div class="a" style="left:0px;top:0;width:10px;height:22px;background:#17375e"></div>
<div class="a" style="left:10px;top:0;width:10px;height:22px;background:#1c467a"></div>
<div class="a" style="left:20px;top:0;width:10px;height:22px;background:#20599d"></div>
<div class="a" style="left:30px;top:0;width:10px;height:22px;background:#2768b8"></div>
<div class="a" style="left:40px;top:0;width:336px;height:22px;background:#fff"></div>
<div class="a" style="left:376px;top:0;width:1411px;height:22px;background:#f2f2f2"></div>
<svg style="left:42px;top:5px" width="12" height="12" viewBox="0 0 12 12"><rect x="0.7" y="0.7" width="10.6" height="10.6" rx="1.2" fill="#fff" stroke="#222" stroke-width="1.25"/></svg>
<div class="c" style="left:64px;width:55px;letter-spacing:-0.45px">02.02.02</div>
<div class="c" style="left:123px;width:249px;letter-spacing:-0.04px">Устройство монолитного перекрытия цоколя</div>
<div class="c r" style="left:376px;width:172px;letter-spacing:-0.1px">309 149</div>
<div class="c r" style="left:553px;width:214px;letter-spacing:-0.1px">309 149</div>
<div class="c r" style="left:772px;width:221px;letter-spacing:-0.1px">309 149</div>
<div class="c r" style="left:998px;width:229px;letter-spacing:-0.1px">309 149</div>
<div class="c r" style="left:1232px;width:257px;letter-spacing:-0.1px">309 149</div>
<div class="c r" style="left:1494px;width:288px;letter-spacing:-0.1px">309 149</div>
<div class="a" style="left:40px;top:21px;width:1747px;height:0;border-top:1px dashed #c6c6c6"></div>
<div class="a" style="left:118px;top:0;width:0;height:22px;border-left:1px dashed #c6c6c6"></div>
<div class="a" style="left:375px;top:0;width:0;height:22px;border-left:1px dashed #c6c6c6"></div>
<div class="a" style="left:552px;top:0;width:0;height:22px;border-left:1px dashed #c6c6c6"></div>
<div class="a" style="left:771px;top:0;width:0;height:22px;border-left:1px dashed #c6c6c6"></div>
<div class="a" style="left:997px;top:0;width:0;height:22px;border-left:1px dashed #c6c6c6"></div>
<div class="a" style="left:1231px;top:0;width:0;height:22px;border-left:1px dashed #c6c6c6"></div>
<div class="a" style="left:1493px;top:0;width:0;height:22px;border-left:1px dashed #c6c6c6"></div>
<div class="a" style="left:1786px;top:0;width:0;height:22px;border-left:1px dashed #c6c6c6"></div>
</div>
<div class="num" style="top:352px">17</div>
<div class="row" style="top:352px">
<div class="a" style="left:0px;top:0;width:10px;height:22px;background:#17375e"></div>
<div class="a" style="left:10px;top:0;width:10px;height:22px;background:#1c467a"></div>
<div class="a" style="left:20px;top:0;width:10px;height:22px;background:#20599d"></div>
<div class="a" style="left:30px;top:0;width:10px;height:22px;background:#2768b8"></div>
<div class="a" style="left:40px;top:0;width:336px;height:22px;background:#fff"></div>
<div class="a" style="left:376px;top:0;width:1411px;height:22px;background:#f2f2f2"></div>
<svg style="left:42px;top:5px" width="12" height="12" viewBox="0 0 12 12"><rect x="0.7" y="0.7" width="10.6" height="10.6" rx="1.2" fill="#fff" stroke="#222" stroke-width="1.25"/></svg>
<div class="c" style="left:64px;width:55px;letter-spacing:-0.45px">02.02.03</div>
<div class="c" style="left:123px;width:249px;letter-spacing:-0.04px">Устройство монолитной входной лестницы</div>
<div class="c r" style="left:376px;width:172px;letter-spacing:-0.1px">27 016</div>
<div class="c r" style="left:553px;width:214px;letter-spacing:-0.1px">27 016</div>
<div class="c r" style="left:772px;width:221px;letter-spacing:-0.1px">27 016</div>
<div class="c r" style="left:998px;width:229px;letter-spacing:-0.1px">27 016</div>
<div class="c r" style="left:1232px;width:257px;letter-spacing:-0.1px">27 016</div>
<div class="c r" style="left:1494px;width:288px;letter-spacing:-0.1px">27 016</div>
<div class="a" style="left:40px;top:21px;width:1747px;height:0;border-top:1px dashed #c6c6c6"></div>
<div class="a" style="left:118px;top:0;width:0;height:22px;border-left:1px dashed #c6c6c6"></div>
<div class="a" style="left:375px;top:0;width:0;height:22px;border-left:1px dashed #c6c6c6"></div>
<div class="a" style="left:552px;top:0;width:0;height:22px;border-left:1px dashed #c6c6c6"></div>
<div class="a" style="left:771px;top:0;width:0;height:22px;border-left:1px dashed #c6c6c6"></div>
<div class="a" style="left:997px;top:0;width:0;height:22px;border-left:1px dashed #c6c6c6"></div>
<div class="a" style="left:1231px;top:0;width:0;height:22px;border-left:1px dashed #c6c6c6"></div>
<div class="a" style="left:1493px;top:0;width:0;height:22px;border-left:1px dashed #c6c6c6"></div>
<div class="a" style="left:1786px;top:0;width:0;height:22px;border-left:1px dashed #c6c6c6"></div>
</div>
<div class="num" style="top:374px">18</div>
<div class="row" style="top:374px">
<div class="a" style="left:0px;top:0;width:10px;height:22px;background:#17375e"></div>
<div class="a" style="left:10px;top:0;width:10px;height:22px;background:#1c467a"></div>
<div class="a" style="left:20px;top:0;width:10px;height:22px;background:#20599d"></div>
<div class="a" style="left:30px;top:0;width:1757px;height:22px;background:#2768b8"></div>
<div class="a" style="left:30px;top:10px;width:10.5px;height:1.3px;background:#fff;opacity:.95"></div>
<svg style="left:42px;top:5px" width="12" height="12" viewBox="0 0 12 12"><rect x="0.7" y="0.7" width="10.6" height="10.6" rx="1.2" fill="none" stroke="#fff" stroke-width="1.1"/></svg>
<div class="c b bc" style="left:64px;width:55px">OP_syn.1</div>
<div class="c b" style="left:123px;width:250px">Монолитные работы надземной части</div>
<div class="c r b bn" style="left:376px;width:172.5px">1 876 538</div>
<div class="c r b bn" style="left:553px;width:214.5px">1 876 538</div>
<div class="c r b bn" style="left:772px;width:221.5px">1 876 538</div>
<div class="c r b bn" style="left:998px;width:229.5px">1 876 538</div>
<div class="c r b bn" style="left:1232px;width:257.5px">1 876 538</div>
<div class="c r b bn" style="left:1494px;width:288.5px">1 876 538</div>
</div>
</div>
<div class="a" style="left:1913px;top:90px;width:6px;height:41px;background:#d6d6da;border-radius:3px"></div>
<div class="a" style="left:44px;top:527px;width:1873px;height:5px;background:#b9b9c0"></div>
<div class="a" style="left:44px;top:532px;width:1873px;height:368px;background:#fff"></div>
<div class="tab" style="left:91px;letter-spacing:0.9px;">Карточка работы</div>
<div class="tab" style="left:323.4px;letter-spacing:0.8px;">Связи работы</div>
<div class="tab" style="left:529.2px;letter-spacing:0.85px;">Связанные графики</div>
<div class="tab" style="left:785.6px;letter-spacing:1.1px;">Справочники</div>
<div class="tab" style="left:988px;letter-spacing:0.8px;color:#1976d2;">Суточное планирование</div>
<div class="tab" style="left:1278.5px;letter-spacing:1.0px;">Фото / Документация</div>
<div class="tab" style="left:1548px;letter-spacing:0.82px;">Запросы и поручения</div>
<div class="tab" style="left:1817.8px;letter-spacing:0.45px;">Табели</div>
<div class="a" style="left:941px;top:575px;width:291px;height:2px;background:#1976d2"></div>
<div class="t" style="left:52px;top:587px;font-size:15px;letter-spacing:-0.07px;color:#111">01.03 Устройство песчаного основания. Сроки 04.05.2025 - 05.05.2025. Прогресс: 100%. Исполнитель: ООО &quot;Георесурс&quot;.</div>
<div class="t" style="left:1171.5px;top:602px;font-size:14px;letter-spacing:.6px">Вид:</div>
<div class="t" style="left:1618px;top:602px;font-size:14px;letter-spacing:.55px">Переходы:</div>
<div class="a" style="left:1021px;top:586px;width:1px;height:44px;background:#c6c6cc"></div>
<div class="a" style="left:1162px;top:586px;width:1px;height:44px;background:#c6c6cc"></div>
<div class="a" style="left:1430px;top:586px;width:1px;height:44px;background:#c6c6cc"></div>
<div class="a" style="left:1564px;top:586px;width:1px;height:44px;background:#c6c6cc"></div>
<div class="a" style="left:1609px;top:586px;width:1px;height:44px;background:#c6c6cc"></div>
<div class="a" style="left:1788px;top:586px;width:1px;height:44px;background:#c6c6cc"></div>
<div class="a" style="left:44px;top:630px;width:1873px;height:1px;background:#c9c9cd"></div>
<div class="a" style="left:44px;top:655px;width:1873px;height:1px;background:#c6c6cc"></div>
<div class="a" style="left:44px;top:680px;width:1873px;height:1px;background:#c6c6cc"></div>
<div class="a" style="left:183px;top:656px;width:1px;height:244px;background:#c6c6cc"></div>
<div class="a" style="left:303px;top:656px;width:1px;height:244px;background:#c6c6cc"></div>
<div class="a" style="left:423px;top:656px;width:1px;height:244px;background:#c6c6cc"></div>
<div class="a" style="left:524px;top:656px;width:1px;height:244px;background:#c6c6cc"></div>
<div class="a" style="left:624px;top:656px;width:1px;height:244px;background:#c6c6cc"></div>
<div class="a" style="left:724px;top:656px;width:1px;height:244px;background:#c6c6cc"></div>
<div class="a" style="left:844px;top:656px;width:1px;height:244px;background:#c6c6cc"></div>
<div class="g" style="left:45px;top:662px;width:138px;letter-spacing:-0.22px;">Тип</div>
<div class="g" style="left:184px;top:662px;width:119px;letter-spacing:-0.22px;">Наименование</div>
<div class="g" style="left:304px;top:662px;width:119px;letter-spacing:-0.22px;">Входит в комплек...</div>
<div class="g" style="left:424px;top:662px;width:100px;letter-spacing:-0.22px;">План</div>
<div class="g" style="left:525px;top:662px;width:99px;letter-spacing:-0.22px;">Факт</div>
<div class="g" style="left:625px;top:662px;width:99px;letter-spacing:-0.22px;">Остаток</div>
<div class="g" style="left:725px;top:662px;width:119px;letter-spacing:-0.22px;text-align:left;padding-left:5.5px;letter-spacing:-0.14px">Нераспределенн...</div>
<div class="g" style="left:845px;top:662px;width:99px;letter-spacing:-0.22px;">Долг</div>
<div class="a" style="left:945px;top:681px;width:420px;height:219px;background:#c5dcf1"></div>
<div class="a" style="left:944px;top:631px;width:1px;height:269px;background:#c6c6cc"></div>
<div class="g" style="left:945px;top:637px;width:209px;letter-spacing:-0.38px;">04.05.2025</div>
<div class="g" style="left:945px;top:662px;width:69px;letter-spacing:-0.22px;">Согл.план</div>
<div class="g" style="left:1015px;top:662px;width:69px;letter-spacing:-0.22px;">Опер.план</div>
<div class="a" style="left:1014px;top:656px;width:0;height:244px;border-left:1px dashed #b9b9bd"></div>
<div class="g" style="left:1085px;top:662px;width:69px;letter-spacing:-0.22px;">Факт</div>
<div class="a" style="left:1084px;top:656px;width:0;height:244px;border-left:1px dashed #b9b9bd"></div>
<div class="a" style="left:1154px;top:631px;width:1px;height:269px;background:#c6c6cc"></div>
<div class="g" style="left:1155px;top:637px;width:209px;letter-spacing:-0.38px;">05.05.2025</div>
<div class="g" style="left:1155px;top:662px;width:69px;letter-spacing:-0.22px;">Согл.план</div>
<div class="g" style="left:1225px;top:662px;width:69px;letter-spacing:-0.22px;">Опер.план</div>
<div class="a" style="left:1224px;top:656px;width:0;height:244px;border-left:1px dashed #b9b9bd"></div>
<div class="g" style="left:1295px;top:662px;width:69px;letter-spacing:-0.22px;">Факт</div>
<div class="a" style="left:1294px;top:656px;width:0;height:244px;border-left:1px dashed #b9b9bd"></div>
<div class="a" style="left:1364px;top:631px;width:1px;height:269px;background:#c6c6cc"></div>
<div class="g" style="left:1365px;top:637px;width:210px;letter-spacing:-0.38px;">06.05.2025</div>
<div class="g" style="left:1365px;top:662px;width:69px;letter-spacing:-0.22px;">Согл.план</div>
<div class="g" style="left:1435px;top:662px;width:69px;letter-spacing:-0.22px;">Опер.план</div>
<div class="a" style="left:1434px;top:656px;width:0;height:244px;border-left:1px dashed #b9b9bd"></div>
<div class="g" style="left:1505px;top:662px;width:69px;letter-spacing:-0.22px;">Факт</div>
<div class="a" style="left:1504px;top:656px;width:0;height:244px;border-left:1px dashed #b9b9bd"></div>
<div class="a" style="left:1575px;top:631px;width:1px;height:269px;background:#c6c6cc"></div>
<div class="g" style="left:1576px;top:637px;width:209px;letter-spacing:-0.38px;">07.05.2025</div>
<div class="g" style="left:1576px;top:662px;width:69px;letter-spacing:-0.22px;">Согл.план</div>
<div class="g" style="left:1646px;top:662px;width:69px;letter-spacing:-0.22px;">Опер.план</div>
<div class="a" style="left:1645px;top:656px;width:0;height:244px;border-left:1px dashed #b9b9bd"></div>
<div class="g" style="left:1716px;top:662px;width:69px;letter-spacing:-0.22px;">Факт</div>
<div class="a" style="left:1715px;top:656px;width:0;height:244px;border-left:1px dashed #b9b9bd"></div>
<div class="a" style="left:1785px;top:631px;width:1px;height:269px;background:#c6c6cc"></div>
<div class="g" style="left:1786px;top:637px;width:209px;letter-spacing:-0.38px;">08.05.2025</div>
<div class="g" style="left:1786px;top:662px;width:69px;letter-spacing:-0.22px;">Согл.план</div>
<div class="g" style="left:1856px;top:662px;width:69px;letter-spacing:-0.22px;">Опер.план</div>
<div class="a" style="left:1855px;top:656px;width:0;height:244px;border-left:1px dashed #b9b9bd"></div>
<div class="g" style="left:1926px;top:662px;width:69px;letter-spacing:-0.22px;">Факт</div>
<div class="a" style="left:1925px;top:656px;width:0;height:244px;border-left:1px dashed #b9b9bd"></div>
<div class="a" style="left:845px;top:681px;width:99px;height:43px;background:#fc8686"></div>
<div class="g" style="left:79px;top:697px;width:104px;text-align:left;overflow:hidden;letter-spacing:-0.12px">Физобъем</div>
<div class="g" style="left:194px;top:697px;width:109px;text-align:left;overflow:hidden">Устройство песчано</div>
<div class="g" style="left:424px;top:697px;width:100px;letter-spacing:-0.38px;">37</div>
<div class="g" style="left:525px;top:697px;width:99px;letter-spacing:-0.38px;">28.5</div>
<div class="g" style="left:625px;top:697px;width:99px;letter-spacing:-0.38px;">8.5</div>
<div class="g" style="left:725px;top:697px;width:119px;letter-spacing:-0.38px;">0</div>
<div class="g" style="left:845px;top:697px;width:99px;letter-spacing:-0.38px;">8.5</div>
<div class="g" style="left:945px;top:697px;width:69px;letter-spacing:-0.38px;">18.5</div>
<div class="g" style="left:1015px;top:697px;width:69px;letter-spacing:-0.38px;">18.5</div>
<div class="g" style="left:1085px;top:697px;width:69px;letter-spacing:-0.38px;">10</div>
<div class="g" style="left:1155px;top:697px;width:69px;letter-spacing:-0.38px;">18.5</div>
<div class="g" style="left:1225px;top:697px;width:69px;letter-spacing:-0.38px;">18.5</div>
<div class="g" style="left:1295px;top:697px;width:69px;letter-spacing:-0.38px;">18.5</div>
<div class="a" style="left:44px;top:724px;width:900px;height:1px;background:#c6c6cc"></div>
<div class="a" style="left:945px;top:724px;width:972px;height:0;border-top:1px dashed #b9b9bd"></div>
<div class="g" style="left:79px;top:741px;width:104px;text-align:left;overflow:hidden;letter-spacing:-0.12px">Трудозатраты</div>
<div class="g" style="left:194px;top:741px;width:109px;text-align:left;overflow:hidden"></div>
<div class="g" style="left:424px;top:741px;width:100px;letter-spacing:-0.38px;">86</div>
<div class="g" style="left:525px;top:741px;width:99px;letter-spacing:-0.38px;">86</div>
<div class="g" style="left:625px;top:741px;width:99px;letter-spacing:-0.38px;">0</div>
<div class="g" style="left:725px;top:741px;width:119px;letter-spacing:-0.38px;">0</div>
<div class="g" style="left:845px;top:741px;width:99px;letter-spacing:-0.38px;">0</div>
<div class="g" style="left:945px;top:741px;width:69px;letter-spacing:-0.38px;">43</div>
<div class="g" style="left:1015px;top:741px;width:69px;letter-spacing:-0.38px;">43</div>
<div class="g" style="left:1085px;top:741px;width:69px;letter-spacing:-0.38px;">43</div>
<div class="g" style="left:1155px;top:741px;width:69px;letter-spacing:-0.38px;">43</div>
<div class="g" style="left:1225px;top:741px;width:69px;letter-spacing:-0.38px;">43</div>
<div class="g" style="left:1295px;top:741px;width:69px;letter-spacing:-0.38px;">43</div>
<div class="a" style="left:44px;top:768px;width:900px;height:1px;background:#c6c6cc"></div>
<div class="a" style="left:945px;top:768px;width:972px;height:0;border-top:1px dashed #b9b9bd"></div>
<div class="g" style="left:79px;top:785px;width:104px;text-align:left;overflow:hidden;letter-spacing:-0.12px">Стоимость</div>
<div class="g" style="left:194px;top:785px;width:109px;text-align:left;overflow:hidden"></div>
<div class="g" style="left:424px;top:785px;width:100px;letter-spacing:-0.38px;">28 490</div>
<div class="g" style="left:525px;top:785px;width:99px;letter-spacing:-0.38px;">28 490</div>
<div class="g" style="left:625px;top:785px;width:99px;letter-spacing:-0.38px;">0</div>
<div class="g" style="left:725px;top:785px;width:119px;letter-spacing:-0.38px;">0</div>
<div class="g" style="left:845px;top:785px;width:99px;letter-spacing:-0.38px;">0</div>
<div class="g" style="left:945px;top:785px;width:69px;letter-spacing:-0.38px;">14 245</div>
<div class="g" style="left:1015px;top:785px;width:69px;letter-spacing:-0.38px;">14 245</div>
<div class="g" style="left:1085px;top:785px;width:69px;letter-spacing:-0.38px;">14 245</div>
<div class="g" style="left:1155px;top:785px;width:69px;letter-spacing:-0.38px;">14 245</div>
<div class="g" style="left:1225px;top:785px;width:69px;letter-spacing:-0.38px;">14 245</div>
<div class="g" style="left:1295px;top:785px;width:69px;letter-spacing:-0.38px;">14 245</div>
<div class="a" style="left:44px;top:812px;width:900px;height:1px;background:#c6c6cc"></div>
<div class="a" style="left:945px;top:812px;width:972px;height:0;border-top:1px dashed #b9b9bd"></div>
<div class="a" style="left:725px;top:813px;width:119px;height:44px;background:#ffff80"></div>
<div class="g" style="left:79px;top:829px;width:104px;text-align:left;overflow:hidden;letter-spacing:-0.12px">Распределенная ра</div>
<div class="g" style="left:194px;top:829px;width:109px;text-align:left;overflow:hidden"></div>
<div class="g" style="left:424px;top:829px;width:100px;letter-spacing:-0.38px;">770</div>
<div class="g" style="left:625px;top:829px;width:99px;letter-spacing:-0.38px;">770</div>
<div class="g" style="left:725px;top:829px;width:119px;letter-spacing:-0.38px;">770</div>
<div class="g" style="left:945px;top:829px;width:69px;letter-spacing:-0.38px;font-weight:700;">770</div>
<div class="g" style="left:1015px;top:829px;width:69px;letter-spacing:-0.38px;font-weight:700;">770</div>
<div class="g" style="left:1085px;top:829px;width:69px;letter-spacing:-0.38px;font-weight:700;">770</div>
<div class="g" style="left:1155px;top:829px;width:69px;letter-spacing:-0.38px;font-weight:700;">770</div>
<div class="g" style="left:1225px;top:829px;width:69px;letter-spacing:-0.38px;font-weight:700;">770</div>
<div class="g" style="left:1295px;top:829px;width:69px;letter-spacing:-0.38px;font-weight:700;">770</div>
<div class="g" style="left:1365px;top:829px;width:69px;letter-spacing:-0.38px;color:#aaa">770</div>
<div class="g" style="left:1435px;top:829px;width:69px;letter-spacing:-0.38px;color:#aaa">770</div>
<div class="g" style="left:1505px;top:829px;width:69px;letter-spacing:-0.38px;color:#aaa">770</div>
<div class="g" style="left:1576px;top:829px;width:69px;letter-spacing:-0.38px;color:#aaa">770</div>
<div class="g" style="left:1646px;top:829px;width:69px;letter-spacing:-0.38px;color:#aaa">770</div>
<div class="g" style="left:1716px;top:829px;width:69px;letter-spacing:-0.38px;color:#aaa">770</div>
<div class="g" style="left:1786px;top:829px;width:69px;letter-spacing:-0.38px;color:#aaa">770</div>
<div class="g" style="left:1856px;top:829px;width:69px;letter-spacing:-0.38px;color:#aaa">770</div>
<div class="a" style="left:44px;top:856px;width:900px;height:1px;background:#c6c6cc"></div>
<div class="a" style="left:945px;top:856px;width:972px;height:0;border-top:1px dashed #b9b9bd"></div>
<div class="a" style="left:725px;top:857px;width:119px;height:44px;background:#ffff80"></div>
<div class="g" style="left:79px;top:873px;width:104px;text-align:left;overflow:hidden;letter-spacing:-0.12px">Машины и механиз</div>
<div class="g" style="left:194px;top:873px;width:109px;text-align:left;overflow:hidden">Самосвал</div>
<div class="g" style="left:625px;top:873px;width:99px;letter-spacing:-0.38px;">2</div>
<div class="g" style="left:725px;top:873px;width:119px;letter-spacing:-0.38px;">2</div>
<svg style="left:1085px;top:681px" width="20" height="20" viewBox="0 0 20 20"><path d="M0 0h20L0 20z" fill="#c90a14"/></svg>
<svg style="left:1085px;top:725px" width="20" height="20" viewBox="0 0 20 20"><path d="M0 0h20L0 20z" fill="#6fd162"/></svg>
<svg style="left:1085px;top:769px" width="20" height="20" viewBox="0 0 20 20"><path d="M0 0h20L0 20z" fill="#6fd162"/></svg>
<svg style="left:1295px;top:681px" width="20" height="20" viewBox="0 0 20 20"><path d="M0 0h20L0 20z" fill="#6fd162"/></svg>
<svg style="left:1295px;top:725px" width="20" height="20" viewBox="0 0 20 20"><path d="M0 0h20L0 20z" fill="#6fd162"/></svg>
<svg style="left:1295px;top:769px" width="20" height="20" viewBox="0 0 20 20"><path d="M0 0h20L0 20z" fill="#6fd162"/></svg>
<div class="a" style="left:44px;top:900px;width:1873px;height:8px;background:#f1f1f4"></div>
<div class="a" style="left:420px;top:900px;width:44px;height:8px;background:#d6d6da;border-radius:4px 4px 0 0"></div>
<div class="a" style="left:1913px;top:631px;width:4px;height:269px;background:#fff"></div>
<div class="a" style="left:1913px;top:631px;width:6px;height:179px;background:#d9d9dd;border-radius:3px"></div>
<svg style="left:9.2px;top:10.0px;color:#3f3f45" width="24" height="24" viewBox="0 0 24 24" fill="none" stroke="#3f3f45" stroke-width="1.7" stroke-linecap="round" stroke-linejoin="round"><path d="M0.8 21h22.6"/><path d="M3.3 21V10.2c0-.6.3-1.1.7-1.5l6.6-5.6c.8-.7 2-.7 2.8 0l6.6 5.6c.4.4.7.9.7 1.5V21"/><path d="M10.1 21v-4.6a1.9 1.9 0 0 1 3.8 0V21"/></svg>
<svg style="left:9.2px;top:54.0px;color:#3f3f45" width="24" height="24" viewBox="0 0 24 24" fill="none" stroke="#3f3f45" stroke-width="1.7" stroke-linecap="round" stroke-linejoin="round"><circle cx="12" cy="12" r="11.200"/><ellipse cx="12" cy="12" rx="4.600" ry="11.200"/><path d="M1.700 8h20.600M1.700 16h20.600"/></svg>
<svg style="left:9.2px;top:142.0px;color:#3f3f45" width="24" height="24" viewBox="0 0 24 24" fill="none" stroke="#3f3f45" stroke-width="1.7" stroke-linecap="round" stroke-linejoin="round"><rect x="0.900" y="0.900" width="22.200" height="22.200" rx="2.600"/><path d="M6.600 5.400v11.600M12.300 5.400v5.400M18 5.400v8"/></svg>
<svg style="left:9.2px;top:186.0px;color:#3f3f45" width="24" height="24" viewBox="0 0 24 24" fill="none" stroke="#3f3f45" stroke-width="1.7" stroke-linecap="round" stroke-linejoin="round"><path d="M0.800 6.600C3.500 2 8 1 12 3s8 2.500 11.300-2"/><path d="M1.300 23V14h7.200M8.500 23V8h7.300v15M15.800 14h7v9M1.300 23h21.500"/></svg>
<svg style="left:9.2px;top:230.0px;color:#3f3f45" width="24" height="24" viewBox="0 0 24 24" fill="none" stroke="#3f3f45" stroke-width="1.7" stroke-linecap="round" stroke-linejoin="round"><path d="M6.300 9.500V3.300c0-1.100.9-2 2-2h12.600c1.100 0 2 .9 2 2v8c0 1.100-.9 2-2 2h-2.100"/><path d="M6.300 2.800h16.400" stroke-width="3.200" stroke-linecap="butt"/><rect x="0.900" y="10.200" width="17.600" height="12.900" rx="2.400"/><path d="M1.200 11.800h17" stroke-width="3.200" stroke-linecap="butt"/></svg>
<svg style="left:9.2px;top:274.0px;color:#3f3f45" width="24" height="24" viewBox="0 0 24 24" fill="none" stroke="#3f3f45" stroke-width="1.7" stroke-linecap="round" stroke-linejoin="round"><path d="M2 23.500V3.800"/><path d="M2 3.800C4.500.8 8.500.9 12 3.200s7.200 2.300 10.200-.5V16.500c-3 2.800-6.700 2.800-10.200.5S4.500 13.900 2 16.900"/></svg>
<svg style="left:9.2px;top:318.0px;color:#3f3f45" width="24" height="24" viewBox="0 0 24 24" fill="none" stroke="#3f3f45" stroke-width="1.7" stroke-linecap="round" stroke-linejoin="round"><path d="M0.900 1.300h22.400M0.900 23h22.400"/><path d="M1.700 7.800l6.400 10M8.600 7.800l6.400 10M15.700 7.800l6.300 10" stroke-width="1.9"/></svg>
<svg style="left:9.2px;top:362.0px;color:#3f3f45" width="24" height="24" viewBox="0 0 24 24" fill="none" stroke="#3f3f45" stroke-width="1.7" stroke-linecap="round" stroke-linejoin="round"><rect x="1" y="1.600" width="8.800" height="8.200"/><rect x="14.100" y="1.600" width="8.800" height="8.200"/><rect x="1" y="14.400" width="8.800" height="8.200"/><rect x="14.100" y="14.400" width="8.800" height="8.200"/></svg>
<svg style="left:9.2px;top:407.5px;color:#3f3f45" width="24" height="24" viewBox="0 0 24 24" fill="none" stroke="#3f3f45" stroke-width="1.7" stroke-linecap="round" stroke-linejoin="round"><ellipse cx="12" cy="5.200" rx="11.200" ry="4.500"/><path d="M0.800 5.200v13.600c0 2.500 5 4.500 11.200 4.500s11.200-2 11.200-4.500V5.200"/><path d="M0.800 12c0 2.500 5 4.500 11.200 4.500s11.200-2 11.200-4.500"/></svg>
<svg style="left:9.2px;top:451.2px;color:#3f3f45" width="24" height="24" viewBox="0 0 24 24" fill="none" stroke="#3f3f45" stroke-width="1.7" stroke-linecap="round" stroke-linejoin="round"><path d="M4.500.9H1v22.200h3.500M19.500.9H23v22.200h-3.500"/><path d="M6.700 18.200L12 4.800l5.300 13.400M8.300 14h7.400"/></svg>
<svg style="left:9.2px;top:495.4px;color:#3f3f45" width="24" height="24" viewBox="0 0 24 24" fill="none" stroke="#3f3f45" stroke-width="1.7" stroke-linecap="round" stroke-linejoin="round"><rect x="1.800" y="3.200" width="20.400" height="19.800" rx="2.600"/><path d="M1.800 8.800h20.400M7.200.8v2.400M16.800.8v2.400"/><path d="M7 13.200h.01M12 13.200h.01M17 13.200h.01M7 18h.01M12 18h.01M17 18h.01" stroke-width="2"/></svg>
<svg style="left:9.2px;top:539.3px;color:#3f3f45" width="24" height="24" viewBox="0 0 24 24" fill="none" stroke="#3f3f45" stroke-width="1.7" stroke-linecap="round" stroke-linejoin="round"><path d="M0.900 12C3.500 7.200 7.500 4.600 12 4.600S20.500 7.200 23.100 12C20.500 16.800 16.500 19.400 12 19.400S3.500 16.800.9 12z"/><circle cx="12" cy="12" r="2.700" stroke-width="2"/></svg>
<svg style="left:9.2px;top:702.8px;color:#3f3f45" width="24" height="24" viewBox="0 0 24 24" fill="none" stroke="#3f3f45" stroke-width="1.7" stroke-linecap="round" stroke-linejoin="round"><circle cx="12" cy="12" r="4"/><path d="M12 .6v3.200M12 20.200v3.200M.6 12h3.200M20.200 12h3.200M4 4l2.200 2.200M17.800 17.800L20 20M4 20l2.200-2.200M17.800 6.200L20 4"/></svg>
<svg style="left:9.2px;top:747.0px;color:#3f3f45" width="24" height="24" viewBox="0 0 24 24" fill="none" stroke="#3f3f45" stroke-width="1.7" stroke-linecap="round" stroke-linejoin="round"><path d="M1 21.500V3.400c0-1.300 1-2.300 2.300-2.300h17.400c1.300 0 2.300 1 2.300 2.300v12.400c0 1.300-1 2.300-2.300 2.300H5z"/><path d="M5.500 6.200h13M5.500 9.700h13M5.500 13.200h8"/></svg>
<svg style="left:9.2px;top:790.6px;color:#3f3f45" width="24" height="24" viewBox="0 0 24 24" fill="none" stroke="#3f3f45" stroke-width="1.7" stroke-linecap="round" stroke-linejoin="round"><path d="M1 17.800c1.800-1.500 2.700-3.500 2.700-6V9.300c0-4.600 3.700-8.300 8.300-8.300s8.300 3.700 8.300 8.300v2.500c0 2.500.9 4.500 2.700 6z"/><path d="M8.200 18.200c0 2.100 1.700 3.800 3.800 3.800s3.800-1.700 3.800-3.800"/></svg>
<svg style="left:9.2px;top:835.0px;color:#3f3f45" width="24" height="24" viewBox="0 0 24 24" fill="none" stroke="#3f3f45" stroke-width="1.7" stroke-linecap="round" stroke-linejoin="round"><path d="M0.800 3.500h13.500M7.500 1v2.500M3.200 3.700c1.500 5 4.800 8.500 9 10.600M11.800 3.700C10.300 8.500 6.800 12.300 1.500 14.600"/><path d="M12.800 22.800l5-13 5 13M14.500 18.600h6.600"/></svg>
<svg style="left:9.2px;top:879.4px;color:#3f3f45" width="24" height="24" viewBox="0 0 24 24" fill="none" stroke="#3f3f45" stroke-width="1.7" stroke-linecap="round" stroke-linejoin="round"><circle cx="12" cy="12" r="11.200"/><path d="M12 11v6.600"/><path d="M12 6.800h.01" stroke-width="2.200"/></svg>
<svg style="left:9.2px;top:98.0px;color:#fff" width="24" height="24" viewBox="0 0 24 24" fill="none" stroke="#fff" stroke-width="2" stroke-linecap="round" stroke-linejoin="round"><path d="M1 4.200h13.200M6 12h12M10.400 19.900h13"/></svg>
<svg style="left:52.8px;top:9.4px;color:#3f3f45" width="25.6" height="25.6" viewBox="0 0 24 24" fill="none" stroke="#3f3f45" stroke-width="1.7" stroke-linecap="round" stroke-linejoin="round"><path d="M2.6 22.3v-4.6c0-.5.2-1 .6-1.400L16.700 2.800c.8-.8 2-.8 2.800 0l2.600 2.600c.8.800.8 2 0 2.800L8.600 21.700c-.4.400-.9.600-1.400.600z"/><path d="M13.800 5.700l5.400 5.400"/></svg>
<svg style="left:104.8px;top:9.8px;color:#3f3f45" width="24" height="24" viewBox="0 0 24 24" fill="none" stroke="#3f3f45" stroke-width="1.7" stroke-linecap="round" stroke-linejoin="round"><circle cx="12" cy="12" r="11.2"/><path d="M12 6.200V12l3.600 3.800"/></svg>
<svg style="left:1708.8px;top:9.9px;color:#3f3f45" width="24" height="24" viewBox="0 0 24 24" fill="none" stroke="#3f3f45" stroke-width="1.7" stroke-linecap="round" stroke-linejoin="round"><path d="M0.800 1h22.400M0.800 23h22.400"/><path d="M7 7.500v9.500M3.600 13.400L7 17l3.400-3.600M17 17V7.500M13.600 11L17 7.400l3.400 3.600" stroke-width="2"/></svg>
<svg style="left:1753.8px;top:9.9px;color:#3f3f45" width="24" height="24" viewBox="0 0 24 24" fill="none" stroke="#3f3f45" stroke-width="1.7" stroke-linecap="round" stroke-linejoin="round"><path d="M22.780 12.780A11 11 0 1 1 19.580 4.420L23.200 8.400"/><path d="M23.200 1.600v6.800h-6.800" /></svg>
<svg style="left:1799.0px;top:10.0px;color:#3f3f45" width="24" height="24" viewBox="0 0 24 24" fill="none" stroke="#3f3f45" stroke-width="1.9" stroke-linecap="round" stroke-linejoin="round"><rect x="1.100" y="1" width="21.800" height="22" rx="2.400"/><path d="M8.600 1v22"/></svg>
<svg style="left:1843.0px;top:10.0px;color:#adadb5" width="24" height="24" viewBox="0 0 24 24" fill="none" stroke="#adadb5" stroke-width="1.9" stroke-linecap="round" stroke-linejoin="round"><rect x="1.100" y="1" width="21.800" height="22" rx="2.400"/><path d="M15.400 1v22"/></svg>
<svg style="left:1886.6px;top:10.0px;color:#3f3f45" width="24" height="24" viewBox="0 0 24 24" fill="none" stroke="#3f3f45" stroke-width="1.9" stroke-linecap="round" stroke-linejoin="round"><rect x="1.100" y="1" width="21.800" height="22" rx="2.400"/><path d="M1.100 15.800h21.800"/></svg>
<svg style="left:1880.0px;top:60.0px;color:#3f3f45" width="24" height="24" viewBox="0 0 24 24" fill="none" stroke="#3f3f45" stroke-width="1.7" stroke-linecap="round" stroke-linejoin="round"><path d="M6.500 6.500l11 11M17.500 6.500l-11 11"/></svg>
<svg style="left:1898.1px;top:53.1px;color:#3f3f45" width="12.4" height="12.4" viewBox="0 0 24 24" fill="none" stroke="#3f3f45" stroke-width="2.5" stroke-linecap="round" stroke-linejoin="round"><path d="M2 2.500h20l-7.500 9.500v8.500l-5-2.500v-6z"/></svg>
<svg style="left:898.8px;top:595.6px;color:#3f3f45" width="24" height="24" viewBox="0 0 24 24" fill="none" stroke="#3f3f45" stroke-width="1.7" stroke-linecap="round" stroke-linejoin="round"><circle cx="12" cy="12" r="11"/><path d="M6.200 12.300l2.400 2.400 4.600-4.700M10.800 13.200l1.500 1.500 5.500-5.300" stroke-width="1.500"/></svg>
<svg style="left:943.0px;top:595.6px;color:#adadb5" width="24" height="24" viewBox="0 0 24 24" fill="none" stroke="#adadb5" stroke-width="1.7" stroke-linecap="round" stroke-linejoin="round"><circle cx="12" cy="12" r="11"/><path d="M7.500 12.300l3.100 3.100 6-6.400" stroke-width="1.500"/></svg>
<svg style="left:987.0px;top:595.6px;color:#adadb5" width="24" height="24" viewBox="0 0 24 24" fill="none" stroke="#adadb5" stroke-width="1.7" stroke-linecap="round" stroke-linejoin="round"><circle cx="12" cy="12" r="11"/><path d="M8.200 8.200l7.600 7.600M15.800 8.200l-7.600 7.600" stroke-width="1.500"/></svg>
<svg style="left:1039.8px;top:595.6px;color:#3f3f45" width="24" height="24" viewBox="0 0 24 24" fill="none" stroke="#3f3f45" stroke-width="1.7" stroke-linecap="round" stroke-linejoin="round"><path d="M1.200 20.100h21.600M5 16.300l-3.900 3.800 3.900 3.800M19 16.300l3.900 3.800-3.900 3.800" stroke-width="1.600"/><text x="12" y="10.100" font-size="13" text-anchor="middle" font-family="Liberation Sans, sans-serif" fill="currentColor" stroke="currentColor" stroke-width=".45" textLength="23.500" lengthAdjust="spacing">123</text></svg>
<svg style="left:1084.0px;top:595.6px;color:#3f3f45" width="24" height="24" viewBox="0 0 24 24" fill="none" stroke="#3f3f45" stroke-width="1.7" stroke-linecap="round" stroke-linejoin="round"><path d="M12.500 4.300h10.800M19.800 0.800l3.600 3.500-3.600 3.500M11.800 20.100H1M4.600 16.600L1 20.100l3.600 3.500" stroke-width="1.500"/><text x="4.800" y="10.400" font-size="12.500" text-anchor="middle" font-family="Liberation Sans, sans-serif" fill="currentColor" stroke="currentColor" stroke-width=".4">!</text><text x="18.300" y="24" font-size="12.500" text-anchor="middle" font-family="Liberation Sans, sans-serif" fill="currentColor" stroke="currentColor" stroke-width=".4">?</text></svg>
<svg style="left:1128.0px;top:595.6px;color:#3f3f45" width="24" height="24" viewBox="0 0 24 24" fill="none" stroke="#3f3f45" stroke-width="1.7" stroke-linecap="round" stroke-linejoin="round"><path d="M1.500 4.600h21" stroke-width="1.500"/><path d="M8 3.400c.3-1.400 1.200-2 2.400-2h3.200c1.200 0 2.100.6 2.400 2z" fill="currentColor" stroke-width="1.400"/><path d="M4.600 7v13.800c0 1.300 1 2.300 2.300 2.300h10.200c1.300 0 2.300-1 2.300-2.300V7"/></svg>
<svg style="left:1220.3px;top:595.6px;color:#3f3f45" width="24" height="24" viewBox="0 0 24 24" fill="none" stroke="#3f3f45" stroke-width="1.7" stroke-linecap="round" stroke-linejoin="round"><g fill="currentColor" stroke="none"><circle cx="11.9" cy="2.9" r="2.2"/><path d="M11.6 22.8L19 13.9c.3-.4.800-.3 1 .1l3.700 8.800z"/><path d="M1 9.400L3.800 6.100c.3-.3.600-.4 1-.4h5.400c.5 0 .9.300 1.100.7l1.100 2.600c.1.200.1.400.2.600l.7 3.800-2.600.5-1.200-3.400-1.600 1.800z"/></g><path d="M4.300 13.800L1.500 22.200M7 14.900l1.400 2.300v5" stroke-width="2.1" stroke-linecap="butt"/><path d="M1.300 10.800l13.700 7.800" stroke-width="1.300"/><path d="M3.800 9.200l2.200-2.200" stroke="#fff" stroke-width="1.1"/></svg>
<svg style="left:1264.4px;top:595.6px;color:#3f3f45" width="24" height="24" viewBox="0 0 24 24" fill="none" stroke="#3f3f45" stroke-width="1.7" stroke-linecap="round" stroke-linejoin="round"><path d="M2.400 23.500C2.800 18.700 6.600 16.200 12 16.200s9.200 2.500 9.600 7.300"/><path d="M7.300 8.400c.2 2.500 2.100 4.300 4.600 4.300s4.400-1.800 4.600-4.300"/><path d="M5.400 6.900h13" stroke-width="1.700"/><path d="M7.300 6.500c0-2.600 1.800-4.500 4.600-4.500s4.600 1.900 4.600 4.500z" fill="currentColor" stroke-width="1"/><path d="M11.900 .9v3M9.200 2v2M14.600 2v2" stroke-width="1.800" stroke-linecap="butt"/></svg>
<svg style="left:1308.4px;top:595.6px;color:#3f3f45" width="24" height="24" viewBox="0 0 24 24" fill="none" stroke="#3f3f45" stroke-width="1.7" stroke-linecap="round" stroke-linejoin="round"><g stroke-width="1.500"><path d="M6.90 3.90v6.00c0 1.16 2.48 2.10 5.50 2.10s5.50-0.94 5.50-2.10v-6.00" fill="#fff"/><ellipse cx="12.40" cy="3.90" rx="5.50" ry="2.10" fill="#fff"/><path d="M6.90 6.90c0 1.16 2.48 2.10 5.50 2.10s5.50-0.94 5.50-2.10"/><path d="M0.80 15.70v4.60c0 1.16 2.48 2.10 5.50 2.10s5.50-0.94 5.50-2.10v-4.60" fill="#fff"/><ellipse cx="6.30" cy="15.70" rx="5.50" ry="2.10" fill="#fff"/><path d="M0.80 18.00c0 1.16 2.48 2.10 5.50 2.10s5.50-0.94 5.50-2.10"/><path d="M12.10 12.20v8.10c0 1.16 2.48 2.10 5.50 2.10s5.50-0.94 5.50-2.10v-8.10" fill="#fff"/><ellipse cx="17.60" cy="12.20" rx="5.50" ry="2.10" fill="#fff"/><path d="M12.10 14.90c0 1.16 2.48 2.10 5.50 2.10s5.50-0.94 5.50-2.10"/><path d="M12.10 17.60c0 1.16 2.48 2.10 5.50 2.10s5.50-0.94 5.50-2.10"/></g></svg>
<svg style="left:1352.4px;top:595.6px;color:#3f3f45" width="24" height="24" viewBox="0 0 24 24" fill="none" stroke="#3f3f45" stroke-width="1.7" stroke-linecap="round" stroke-linejoin="round"><path d="M4.200 8.300L7.600 4.900l1.900 1.800 4.700-4.200 5.700 5.800z" fill="currentColor" stroke-width=".8"/><path d="M0.900 10.400h22.200" stroke-width="1.900"/><path d="M1.400 11.200l2.300 2.800M22.600 11.200l-2.300 2.800" stroke-width="1.700"/><circle cx="5.100" cy="18.500" r="2.300" stroke-width="1.600"/><circle cx="18.600" cy="18.500" r="2.300" stroke-width="1.600"/><path d="M9.600 18.500h4.500"/></svg>
<svg style="left:1397.0px;top:595.6px;color:#3f3f45" width="24" height="24" viewBox="0 0 24 24" fill="none" stroke="#3f3f45" stroke-width="1.7" stroke-linecap="round" stroke-linejoin="round"><g stroke-width="1.300"><path d="M6.70 2.30v4.00c0 0.88 2.02 1.60 4.50 1.60s4.50-0.72 4.50-1.60v-4.00" fill="#fff"/><ellipse cx="11.20" cy="2.30" rx="4.50" ry="1.60" fill="#fff"/><path d="M6.70 4.30c0 0.88 2.02 1.60 4.50 1.60s4.50-0.72 4.50-1.60"/><path d="M2.40 10.70v3.40c0 0.88 2.02 1.60 4.50 1.60s4.50-0.72 4.50-1.60v-3.40" fill="#fff"/><ellipse cx="6.90" cy="10.70" rx="4.50" ry="1.60" fill="#fff"/><path d="M2.40 12.40c0 0.88 2.02 1.60 4.50 1.60s4.50-0.72 4.50-1.60"/><path d="M11.90 7.20v6.90c0 0.88 2.02 1.60 4.50 1.60s4.50-0.72 4.50-1.60v-6.90" fill="#fff"/><ellipse cx="16.40" cy="7.20" rx="4.50" ry="1.60" fill="#fff"/><path d="M11.90 10.65c0 0.88 2.02 1.60 4.50 1.60s4.50-0.72 4.50-1.60"/></g><path d="M1.600 20.400h19.200M17.600 17.400l3.400 3-3.400 3" stroke-width="1.400"/></svg>
<svg style="left:1441.5px;top:595.6px;color:#3f3f45" width="24" height="24" viewBox="0 0 24 24" fill="none" stroke="#3f3f45" stroke-width="1.7" stroke-linecap="round" stroke-linejoin="round"><rect x="3.600" y="3.100" width="16.700" height="19.500" rx="2.600" stroke-width="1.900"/><path d="M7.300 5.800V1.800c0-.5.400-.9.900-.9h7.400c.5 0 .9.400.9.900v4z" fill="currentColor" stroke-width="1"/><path d="M11.900 9.900v6"/><path d="M11.900 18.900h.01" stroke-width="2"/></svg>
<svg style="left:1485.4px;top:595.6px;color:#3f3f45" width="24" height="24" viewBox="0 0 24 24" fill="none" stroke="#3f3f45" stroke-width="1.7" stroke-linecap="round" stroke-linejoin="round"><rect x="3.600" y="3.100" width="16.700" height="19.500" rx="2.600" stroke-width="1.900"/><path d="M7.300 5.800V1.800c0-.5.400-.9.900-.9h7.400c.5 0 .9.400.9.900v4z" fill="currentColor" stroke-width="1"/><text x="12" y="19.4" font-size="12.5" text-anchor="middle" font-family="Liberation Sans, sans-serif" fill="currentColor" stroke="none" font-weight="700">?</text></svg>
<svg style="left:1529.4px;top:595.6px;color:#3f3f45" width="24" height="24" viewBox="0 0 24 24" fill="none" stroke="#3f3f45" stroke-width="1.7" stroke-linecap="round" stroke-linejoin="round"><rect x="3.600" y="3.100" width="16.700" height="19.500" rx="2.600" stroke-width="1.900"/><path d="M7.300 5.800V1.800c0-.5.400-.9.900-.9h7.400c.5 0 .9.400.9.900v4z" fill="currentColor" stroke-width="1"/><path d="M7.800 14.200l3 3 5.600-5.800" stroke-width="1.900"/></svg>
<svg style="left:1574.5px;top:595.6px;color:#3f3f45" width="24" height="24" viewBox="0 0 24 24" fill="none" stroke="#3f3f45" stroke-width="1.7" stroke-linecap="round" stroke-linejoin="round"><rect x="2.100" y="3.800" width="19.800" height="19.400" rx="3"/><path d="M2.100 8.800h19.800M7.200.8v3M16.800.8v3M7 8.800v14.400M12 8.800v14.400M17 8.800v14.400"/><path d="M2.100 7h19.800" stroke-width="2.400"/></svg>
<svg style="left:1709.7px;top:595.6px;color:#adadb5" width="24" height="24" viewBox="0 0 24 24" fill="none" stroke="#adadb5" stroke-width="1.7" stroke-linecap="round" stroke-linejoin="round"><rect x="2.100" y="3.800" width="19.800" height="19.400" rx="3"/><path d="M2.100 9.400h19.800M7.200.8v3M16.800.8v3"/><path d="M5.800 12v8.400" /><path d="M17.600 11.800v8.800L10.400 16.200z" fill="currentColor" stroke-width=".8"/></svg>
<svg style="left:1753.8px;top:595.6px;color:#adadb5" width="24" height="24" viewBox="0 0 24 24" fill="none" stroke="#adadb5" stroke-width="1.7" stroke-linecap="round" stroke-linejoin="round"><rect x="2.100" y="3.800" width="19.800" height="19.400" rx="3"/><path d="M2.100 9.400h19.800M7.200.8v3M16.800.8v3"/><path d="M5.800 12v8.400" /><path d="M10.200 11.800v8.800l7.200-4.400z" fill="currentColor" stroke-width=".8"/></svg>
<svg style="left:1798.7px;top:595.6px;color:#3f3f45" width="24" height="24" viewBox="0 0 24 24" fill="none" stroke="#3f3f45" stroke-width="1.7" stroke-linecap="round" stroke-linejoin="round"><rect x="2.100" y="3.800" width="19.800" height="19.400" rx="3"/><path d="M2.100 9.400h19.800M7.200.8v3M16.800.8v3"/><text x="12" y="20.6" font-size="11.5" text-anchor="middle" font-family="Liberation Sans, sans-serif" fill="currentColor" stroke="none" font-weight="700">S</text></svg>
<svg style="left:1842.9px;top:595.6px;color:#3f3f45" width="24" height="24" viewBox="0 0 24 24" fill="none" stroke="#3f3f45" stroke-width="1.7" stroke-linecap="round" stroke-linejoin="round"><rect x="2.100" y="3.800" width="19.800" height="19.400" rx="3"/><path d="M2.100 9.400h19.800M7.200.8v3M16.800.8v3"/><text x="12" y="20.6" font-size="11.5" text-anchor="middle" font-family="Liberation Sans, sans-serif" fill="currentColor" stroke="none" font-weight="700">D</text></svg>
<svg style="left:1886.9px;top:595.6px;color:#3f3f45" width="24" height="24" viewBox="0 0 24 24" fill="none" stroke="#3f3f45" stroke-width="1.7" stroke-linecap="round" stroke-linejoin="round"><rect x="2.100" y="3.800" width="19.800" height="19.400" rx="3"/><path d="M2.100 9.400h19.800M7.200.8v3M16.800.8v3"/><text x="12" y="20.6" font-size="11.5" text-anchor="middle" font-family="Liberation Sans, sans-serif" fill="currentColor" stroke="none" font-weight="700">F</text></svg>
<svg style="left:53.5px;top:694.0px;color:#3f3f45" width="17" height="17" viewBox="0 0 24 24" fill="none" stroke="#3f3f45" stroke-width="1.7" stroke-linecap="round" stroke-linejoin="round"><g fill="currentColor" stroke="none"><circle cx="11.9" cy="2.9" r="2.2"/><path d="M11.6 22.8L19 13.9c.3-.4.800-.3 1 .1l3.700 8.800z"/><path d="M1 9.400L3.800 6.100c.3-.3.600-.4 1-.4h5.400c.5 0 .9.300 1.100.7l1.100 2.600c.1.200.1.400.2.600l.7 3.800-2.600.5-1.200-3.400-1.600 1.800z"/></g><path d="M4.300 13.800L1.500 22.200M7 14.900l1.400 2.300v5" stroke-width="2.1" stroke-linecap="butt"/><path d="M1.300 10.800l13.700 7.800" stroke-width="1.300"/><path d="M3.800 9.200l2.200-2.200" stroke="#fff" stroke-width="1.1"/></svg>
<svg style="left:53.5px;top:738.0px;color:#3f3f45" width="17" height="17" viewBox="0 0 24 24" fill="none" stroke="#3f3f45" stroke-width="1.7" stroke-linecap="round" stroke-linejoin="round"><path d="M2.400 23.500C2.800 18.700 6.600 16.200 12 16.200s9.200 2.500 9.600 7.300"/><path d="M7.300 8.400c.2 2.500 2.100 4.300 4.600 4.300s4.400-1.800 4.600-4.300"/><path d="M5.400 6.900h13" stroke-width="1.700"/><path d="M7.300 6.500c0-2.600 1.800-4.500 4.600-4.500s4.600 1.900 4.600 4.500z" fill="currentColor" stroke-width="1"/><path d="M11.900 .9v3M9.200 2v2M14.600 2v2" stroke-width="1.800" stroke-linecap="butt"/></svg>
<svg style="left:53.5px;top:782.0px;color:#3f3f45" width="17" height="17" viewBox="0 0 24 24" fill="none" stroke="#3f3f45" stroke-width="1.7" stroke-linecap="round" stroke-linejoin="round"><g stroke-width="1.500"><path d="M6.90 3.90v6.00c0 1.16 2.48 2.10 5.50 2.10s5.50-0.94 5.50-2.10v-6.00" fill="#fff"/><ellipse cx="12.40" cy="3.90" rx="5.50" ry="2.10" fill="#fff"/><path d="M6.90 6.90c0 1.16 2.48 2.10 5.50 2.10s5.50-0.94 5.50-2.10"/><path d="M0.80 15.70v4.60c0 1.16 2.48 2.10 5.50 2.10s5.50-0.94 5.50-2.10v-4.60" fill="#fff"/><ellipse cx="6.30" cy="15.70" rx="5.50" ry="2.10" fill="#fff"/><path d="M0.80 18.00c0 1.16 2.48 2.10 5.50 2.10s5.50-0.94 5.50-2.10"/><path d="M12.10 12.20v8.10c0 1.16 2.48 2.10 5.50 2.10s5.50-0.94 5.50-2.10v-8.10" fill="#fff"/><ellipse cx="17.60" cy="12.20" rx="5.50" ry="2.10" fill="#fff"/><path d="M12.10 14.90c0 1.16 2.48 2.10 5.50 2.10s5.50-0.94 5.50-2.10"/><path d="M12.10 17.60c0 1.16 2.48 2.10 5.50 2.10s5.50-0.94 5.50-2.10"/></g></svg>
<svg style="left:53.5px;top:826.0px;color:#3f3f45" width="17" height="17" viewBox="0 0 24 24" fill="none" stroke="#3f3f45" stroke-width="1.7" stroke-linecap="round" stroke-linejoin="round"><g stroke-width="1.300"><path d="M6.70 2.30v4.00c0 0.88 2.02 1.60 4.50 1.60s4.50-0.72 4.50-1.60v-4.00" fill="#fff"/><ellipse cx="11.20" cy="2.30" rx="4.50" ry="1.60" fill="#fff"/><path d="M6.70 4.30c0 0.88 2.02 1.60 4.50 1.60s4.50-0.72 4.50-1.60"/><path d="M2.40 10.70v3.40c0 0.88 2.02 1.60 4.50 1.60s4.50-0.72 4.50-1.60v-3.40" fill="#fff"/><ellipse cx="6.90" cy="10.70" rx="4.50" ry="1.60" fill="#fff"/><path d="M2.40 12.40c0 0.88 2.02 1.60 4.50 1.60s4.50-0.72 4.50-1.60"/><path d="M11.90 7.20v6.90c0 0.88 2.02 1.60 4.50 1.60s4.50-0.72 4.50-1.60v-6.90" fill="#fff"/><ellipse cx="16.40" cy="7.20" rx="4.50" ry="1.60" fill="#fff"/><path d="M11.90 10.65c0 0.88 2.02 1.60 4.50 1.60s4.50-0.72 4.50-1.60"/></g><path d="M1.600 20.400h19.200M17.600 17.400l3.400 3-3.400 3" stroke-width="1.400"/></svg>
<svg style="left:53.5px;top:870.0px;color:#3f3f45" width="17" height="17" viewBox="0 0 24 24" fill="none" stroke="#3f3f45" stroke-width="1.7" stroke-linecap="round" stroke-linejoin="round"><path d="M4.200 8.300L7.600 4.900l1.900 1.800 4.700-4.200 5.700 5.800z" fill="currentColor" stroke-width=".8"/><path d="M0.900 10.400h22.200" stroke-width="1.900"/><path d="M1.400 11.200l2.300 2.800M22.600 11.200l-2.300 2.800" stroke-width="1.700"/><circle cx="5.100" cy="18.500" r="2.300" stroke-width="1.600"/><circle cx="18.600" cy="18.500" r="2.300" stroke-width="1.600"/><path d="M9.600 18.500h4.500"/></svg>
<svg style="left:1780px;top:50px" width="20" height="32" viewBox="0 0 20 32"><rect x="7.6" y="6.2" width="1.8" height="5.6" rx=".8" fill="#3f3f45"/><path d="M3 24.4h10l-5 3.8z" fill="#4a4a50"/></svg>
<div class="a" style="left:1301px;top:44px;width:487px;height:240px;background:#f4f4f6;border-radius:0 0 5px 5px;box-shadow:0 4px 6px -1px rgba(0,0,0,.38)"></div>
<svg style="left:1317.2px;top:56.0px;color:#505056" width="24" height="24" viewBox="0 0 24 24" fill="none" stroke="#505056" stroke-width="1.7" stroke-linecap="round" stroke-linejoin="round"><g fill="currentColor" stroke="none"><circle cx="7.200" cy="3.400" r="2.500"/><circle cx="16.800" cy="3.400" r="2.500"/><circle cx="7.200" cy="12" r="2.500"/><circle cx="16.800" cy="12" r="2.500"/><circle cx="7.200" cy="20.600" r="2.500"/><circle cx="16.800" cy="20.600" r="2.500"/></g></svg>
<svg style="left:1317.2px;top:104.0px;color:#505056" width="24" height="24" viewBox="0 0 24 24" fill="none" stroke="#505056" stroke-width="1.7" stroke-linecap="round" stroke-linejoin="round"><path d="M22.780 12.780A11 11 0 1 1 19.580 4.420L23 8.200"/><path d="M23 2v6.200h-6.200" /><path d="M8 11v5.400M12 7.600v8.800M16 13.400v3" stroke-width="1.800"/></svg>
<svg style="left:1317.2px;top:152.0px;color:#505056" width="24" height="24" viewBox="0 0 24 24" fill="none" stroke="#505056" stroke-width="1.7" stroke-linecap="round" stroke-linejoin="round"><path d="M22.780 12.780A11 11 0 1 1 19.580 4.420L23 8.200"/><path d="M23 2v6.200h-6.200" /><path d="M12 12h.01" stroke-width="2.600"/></svg>
<svg style="left:1317.2px;top:200.0px;color:#505056" width="24" height="24" viewBox="0 0 24 24" fill="none" stroke="#505056" stroke-width="1.7" stroke-linecap="round" stroke-linejoin="round"><path d="M22.780 12.780A11 11 0 1 1 19.580 4.420L23 8.200"/><path d="M23 2v6.200h-6.200" /><path d="M12 6.400V12l3.400 3.600"/></svg>
<svg style="left:1317.2px;top:248.0px;color:#505056" width="24" height="24" viewBox="0 0 24 24" fill="none" stroke="#505056" stroke-width="1.7" stroke-linecap="round" stroke-linejoin="round"><path d="M22.780 12.780A11 11 0 1 1 19.580 4.420L23 8.200"/><path d="M23 2v6.200h-6.200" /><g stroke-width="1"><path d="M5.60 10.80v3.60c0 0.72 1.35 1.30 3.00 1.30s3.00-0.58 3.00-1.30v-3.60" fill="#fff"/><ellipse cx="8.60" cy="10.80" rx="3.00" ry="1.30" fill="#fff"/><path d="M5.60 12.60c0 0.72 1.35 1.30 3.00 1.30s3.00-0.58 3.00-1.30"/><path d="M12.20 10.80v3.60c0 0.72 1.35 1.30 3.00 1.30s3.00-0.58 3.00-1.30v-3.60" fill="#fff"/><ellipse cx="15.20" cy="10.80" rx="3.00" ry="1.30" fill="#fff"/><path d="M12.20 12.60c0 0.72 1.35 1.30 3.00 1.30s3.00-0.58 3.00-1.30"/></g></svg>
<div class="t" style="left:1357px;top:59px;font-size:15px;color:#222;letter-spacing:0px">Обновить индикаторы и расчетные атрибуты</div>
<div class="t" style="left:1357px;top:107px;font-size:15px;color:#222;letter-spacing:-0.08px">Синхронизировать данные по ФО, ТР, СТ, ресурсам</div>
<div class="t" style="left:1357px;top:155px;font-size:15px;color:#222;letter-spacing:-0.1px">Обновить плановую стоимость, ФО и ТР на дату</div>
<div class="t" style="left:1357px;top:203px;font-size:15px;color:#222;letter-spacing:-0.08px">Обновить целевые даты</div>
<div class="t" style="left:1357px;top:251px;font-size:15px;color:#222;letter-spacing:0px">Рассчитать стоимость</div>
<div class="a" style="left:1752px;top:61px;width:16px;height:16px;background:#c1050f;border-radius:50%"></div>
<div class="a" style="left:1752px;top:109px;width:16px;height:16px;background:#c1050f;border-radius:50%"></div>
<div class="a" style="left:1681px;top:59px;width:28.5px;height:17.5px;background:#ececee;border:1px solid #babac2;border-radius:3px"></div>
<div class="a" style="left:1720px;top:59px;width:15.5px;height:17.5px;background:#ececee;border:1px solid #babac2;border-radius:3px"></div>
<div class="t" style="left:1685px;top:61px;font:12px/14px 'Liberation Mono',monospace;color:#333;letter-spacing:-0.3px;font-weight:700">Alt</div>
<div class="t" style="left:1724.3px;top:61px;font:12px/14px 'Liberation Mono',monospace;color:#333;font-weight:700">I</div>
<div class="t" style="left:1711px;top:58.5px;font:14px/16px 'Liberation Sans',sans-serif;color:#222;font-weight:700">+</div>
<svg style="left:0;top:0" width="1917" height="908" viewBox="0 0 1917 908">
<line x1="1829" y1="83" x2="1788" y2="42" stroke="#000" stroke-width="3.2"/>
<path d="M1780.7 34.7L1792.2 39.6L1785.6 46.2z" fill="#000" stroke="#000" stroke-width="1" stroke-linejoin="round"/>
<ellipse cx="1839.2" cy="93.5" rx="15.7" ry="17.2" fill="#fff" stroke="#000" stroke-width="3.2"/>
<text x="1838.8" y="99.8" font-size="20.5" text-anchor="middle" font-family="Liberation Sans, sans-serif" fill="#000">1</text>
<line x1="1583" y1="260" x2="1526" y2="260" stroke="#000" stroke-width="3"/>
<path d="M1516.5 260L1528.5 254.8V265.2z" fill="#000" stroke="#000" stroke-width="1" stroke-linejoin="round"/>
<ellipse cx="1598.3" cy="260" rx="15.4" ry="16.9" fill="#fff" stroke="#000" stroke-width="3.2"/>
<text x="1598.3" y="267.2" font-size="20.5" text-anchor="middle" font-family="Liberation Sans, sans-serif" fill="#000">2</text>
</svg>
</body></html>
